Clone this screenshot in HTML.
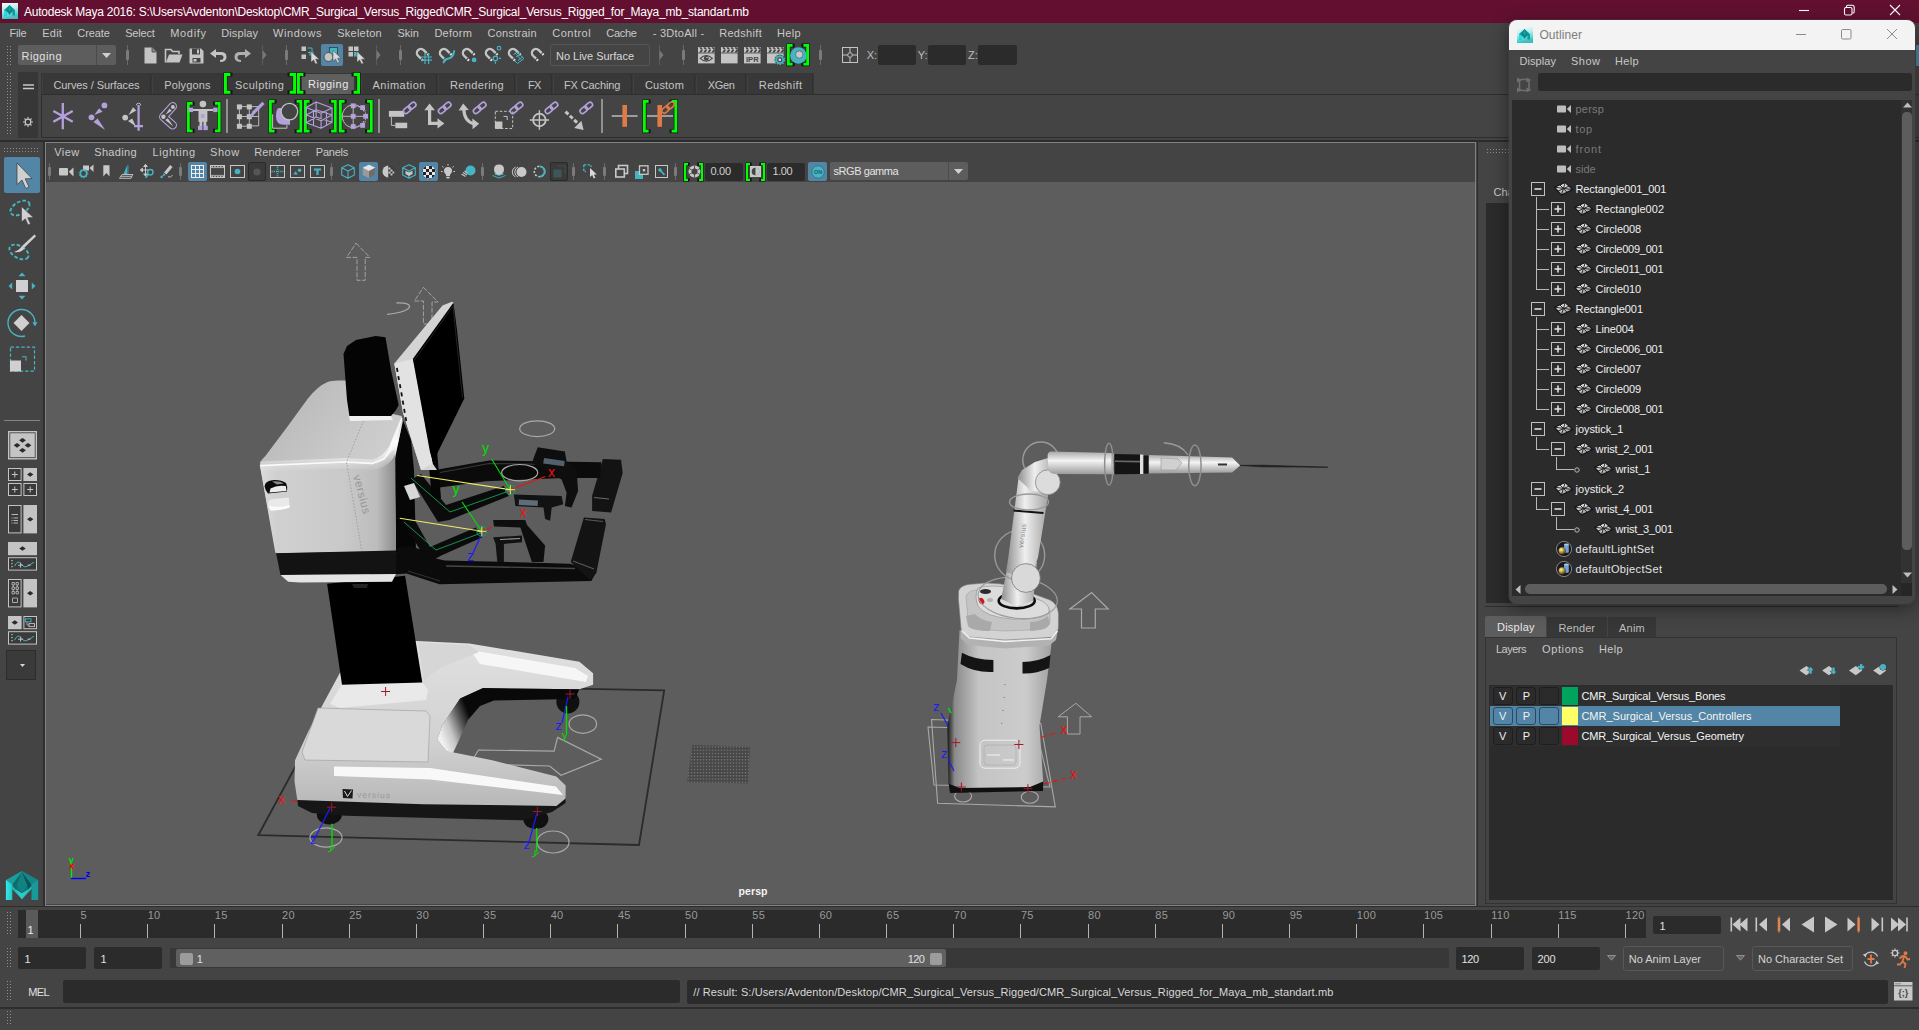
<!DOCTYPE html>
<html><head><meta charset="utf-8"><title>Autodesk Maya 2016</title><style>
html,body{margin:0;padding:0;}
body{width:1919px;height:1030px;overflow:hidden;background:#444444;position:relative;font-family:"Liberation Sans",sans-serif;}
#root{position:absolute;left:0;top:0;width:1919px;height:1030px;overflow:hidden;background:#444444;}
#root div,#root svg,#root span.t{position:absolute;}
span.t{white-space:pre;}
svg{overflow:visible;}
</style></head><body><div id="root">
<div style="left:0px;top:0px;width:1919px;height:23px;background:#631030;"></div>
<span class="t" style="left:24px;top:4.04px;font-size:12px;line-height:16px;color:#ffffff;letter-spacing:-0.239px;">Autodesk Maya 2016: S:\Users\Avdenton\Desktop\CMR_Surgical_Versus_Rigged\CMR_Surgical_Versus_Rigged_for_Maya_mb_standart.mb</span>
<svg style="left:2px;top:3px;" width="16" height="16" viewBox="0 0 16 16"><defs><linearGradient id="mg2" x1="0" y1="0" x2="0.25" y2="1"><stop offset="0" stop-color="#f4fcfb"/><stop offset="0.45" stop-color="#bfeceb"/><stop offset="1" stop-color="#27c4c6"/></linearGradient></defs><rect x="0" y="0" width="16" height="16" fill="url(#mg2)"/><path d="M2 7 L7.6 2 L13 7 V12.4 H10.4 V8.6 L7.6 12 L4.6 8.6 V12.4 H2 Z" fill="#109a9c"/><path d="M2 7 L4.6 8.6 V12.4 H2 Z" fill="#1fe0e2"/><path d="M7.6 2 L4.6 7.5 L7.6 10.4 L10.4 7.5 Z" fill="#0b7e82"/><path d="M7.6 2 L6.2 6.5 L7.6 9 L9 6.5Z" fill="#13a3a4"/><rect x="8" y="13.4" width="7" height="1.4" fill="#8aa" opacity="0.7"/></svg>
<svg style="left:1795px;top:0px;" width="124" height="23"><path d="M4 10.5 H14" stroke="#fff" stroke-width="1.1" fill="none"/><rect x="49.5" y="7.5" width="7.5" height="7.5" rx="1.5" fill="none" stroke="#fff" stroke-width="1.1"/><path d="M51.5 7.3 V6.6 Q51.5 5.3 52.8 5.3 H57.2 Q59.2 5.3 59.2 7.3 V11.7 Q59.2 13 57.9 13 H57.2" fill="none" stroke="#fff" stroke-width="1.1"/><path d="M95 5 L105 15 M105 5 L95 15" stroke="#fff" stroke-width="1.1" fill="none"/></svg>
<span class="t" style="left:9.4px;top:26.19px;font-size:11px;line-height:14px;color:#c8c8c8;letter-spacing:-0.142px;">File</span>
<span class="t" style="left:42.3px;top:26.19px;font-size:11px;line-height:14px;color:#c8c8c8;letter-spacing:0.215px;">Edit</span>
<span class="t" style="left:77.3px;top:26.19px;font-size:11px;line-height:14px;color:#c8c8c8;letter-spacing:-0.103px;">Create</span>
<span class="t" style="left:125.2px;top:26.19px;font-size:11px;line-height:14px;color:#c8c8c8;letter-spacing:-0.195px;">Select</span>
<span class="t" style="left:170.2px;top:26.19px;font-size:11px;line-height:14px;color:#c8c8c8;letter-spacing:0.680px;">Modify</span>
<span class="t" style="left:221.3px;top:26.19px;font-size:11px;line-height:14px;color:#c8c8c8;letter-spacing:0.089px;">Display</span>
<span class="t" style="left:272.9px;top:26.19px;font-size:11px;line-height:14px;color:#c8c8c8;letter-spacing:0.663px;">Windows</span>
<span class="t" style="left:337.3px;top:26.19px;font-size:11px;line-height:14px;color:#c8c8c8;letter-spacing:0.227px;">Skeleton</span>
<span class="t" style="left:397.5px;top:26.19px;font-size:11px;line-height:14px;color:#c8c8c8;letter-spacing:-0.033px;">Skin</span>
<span class="t" style="left:434.4px;top:26.19px;font-size:11px;line-height:14px;color:#c8c8c8;letter-spacing:0.287px;">Deform</span>
<span class="t" style="left:487.5px;top:26.19px;font-size:11px;line-height:14px;color:#c8c8c8;letter-spacing:0.265px;">Constrain</span>
<span class="t" style="left:552.3px;top:26.19px;font-size:11px;line-height:14px;color:#c8c8c8;letter-spacing:0.473px;">Control</span>
<span class="t" style="left:606.3px;top:26.19px;font-size:11px;line-height:14px;color:#c8c8c8;letter-spacing:-0.299px;">Cache</span>
<span class="t" style="left:652.7px;top:26.19px;font-size:11px;line-height:14px;color:#c8c8c8;letter-spacing:0.260px;">- 3DtoAll -</span>
<span class="t" style="left:719.2px;top:26.19px;font-size:11px;line-height:14px;color:#c8c8c8;letter-spacing:0.307px;">Redshift</span>
<span class="t" style="left:777px;top:26.19px;font-size:11px;line-height:14px;color:#c8c8c8;letter-spacing:0.292px;">Help</span>
<div style="left:7px;top:46px;width:4px;height:19px;background:repeating-linear-gradient(90deg,#8e8e8e 0 1px,transparent 1px 3px);-webkit-mask-image:repeating-linear-gradient(0deg,#000 0 1px,transparent 1px 3px);mask-image:repeating-linear-gradient(0deg,#000 0 1px,transparent 1px 3px);"></div>
<div style="left:18px;top:45px;width:98px;height:20px;background:#5d5d5d;border-radius:2px;"></div>
<div style="left:95.5px;top:45px;width:1px;height:20px;background:#4a4a4a;"></div>
<span class="t" style="left:21.5px;top:49.19px;font-size:11px;line-height:14px;color:#e0e0e0;letter-spacing:0.449px;">Rigging</span>
<svg style="left:102px;top:53.2px;" width="9" height="5"><path d="M0 0 L9 0 L4.5 5 Z" fill="#d0d0d0"/></svg>
<div style="left:127px;top:45px;width:1px;height:20px;background:#6a6a6a;"></div>
<div style="left:126px;top:50px;width:3px;height:10px;background:#7a7a7a;border-radius:1px;"></div>
<svg style="left:143.5px;top:46.5px;" width="13" height="17"><path d="M0.5 0.5 H8 L12.5 5 V16.5 H0.5 Z" fill="#c4c4c4"/><path d="M8 0.5 V5 H12.5" fill="#8a8a8a" stroke="#444" stroke-width="0.8"/></svg>
<svg style="left:164.5px;top:48px;" width="18" height="15"><path d="M0.5 14.5 V1.5 H6 L7.5 3.5 H14 V6" fill="none" stroke="#c4c4c4" stroke-width="1.6"/><path d="M1 14.5 L4 6.5 H17.5 L14.5 14.5 Z" fill="#c4c4c4"/></svg>
<svg style="left:189px;top:47.5px;" width="15" height="16"><path d="M0.5 0.5 H12 L14.5 3 V15.5 H0.5 Z" fill="#c4c4c4"/><rect x="3" y="0.5" width="8" height="6" fill="#444"/><rect x="8" y="1.5" width="2" height="4" fill="#c4c4c4"/><rect x="3.5" y="10" width="8" height="4.5" fill="#444"/><rect x="4.5" y="11" width="3" height="2.5" fill="#c4c4c4"/></svg>
<svg style="left:210px;top:49px;" width="17" height="13"><path d="M6 0 L0 4.5 L6 9 V6 H11 Q13.5 6 13.5 8.5 Q13.5 11 10 11 V13 Q16.5 13 16.5 8 Q16.5 3 11 3 H6 Z" fill="#c4c4c4"/></svg>
<svg style="left:233.8px;top:49px;" width="17" height="13"><g transform="translate(17,0) scale(-1,1)"><path d="M6 0 L0 4.5 L6 9 V6 H11 Q13.5 6 13.5 8.5 Q13.5 11 10 11 V13 Q16.5 13 16.5 8 Q16.5 3 11 3 H6 Z" fill="#b0b0b0"/></g></svg>
<div style="left:262px;top:45px;width:1px;height:20px;background:#5a5a5a;"></div>
<svg style="left:262px;top:45px;" width="6" height="20"><path d="M0.5 5 L4.5 10 L0.5 15 Z" fill="#777"/></svg>
<div style="left:285.8px;top:45px;width:1px;height:20px;background:#6a6a6a;"></div>
<div style="left:284.8px;top:50px;width:3px;height:10px;background:#7a7a7a;border-radius:1px;"></div>
<svg style="left:300.5px;top:46px;" width="18" height="18"><rect x="0.5" y="0.5" width="4.5" height="4.5" fill="#c4c4c4"/><rect x="0.5" y="8.5" width="4.5" height="4.5" fill="#c4c4c4"/><path d="M6.5 2 H11 V5 M7 6.5 H9" stroke="#45b5c4" fill="none" stroke-width="1"/><rect x="8.5" y="5.5" width="4" height="4" fill="#45b5c4"/><g transform="translate(10,5.5)"><path d="M0 0 L0 10.8 L2.6 8.4 L4.5 12.6 L6.5 11.7 L4.6 7.7 L8.2 7.7 Z" fill="#d8d8d8" stroke="#444" stroke-width="0.5"/></g></svg>
<div style="left:321px;top:44px;width:22px;height:22px;background:#5285a6;border-radius:2px;"></div>
<svg style="left:323px;top:46px;" width="18" height="18"><rect x="6.5" y="1.5" width="8" height="8" fill="#45b5c4" stroke="#3a3a3a" stroke-width="0.8"/><circle cx="5.5" cy="11" r="4.5" fill="#c4c4c4" stroke="#3a3a3a" stroke-width="0.8"/><g transform="translate(10,4.5)"><path d="M0 0 L0 10.8 L2.6 8.4 L4.5 12.6 L6.5 11.7 L4.6 7.7 L8.2 7.7 Z" fill="#d8d8d8" stroke="#444" stroke-width="0.5"/></g></svg>
<svg style="left:347.5px;top:46px;" width="17" height="18"><rect x="0.5" y="0.5" width="4.5" height="4.5" fill="#c4c4c4"/><rect x="6" y="0.5" width="4.5" height="4.5" fill="#c4c4c4"/><rect x="0.5" y="6" width="4.5" height="4.5" fill="#c4c4c4"/><rect x="6" y="6" width="4.5" height="4.5" fill="#45b5c4"/><g transform="translate(9,5.5)"><path d="M0 0 L0 10.8 L2.6 8.4 L4.5 12.6 L6.5 11.7 L4.6 7.7 L8.2 7.7 Z" fill="#d8d8d8" stroke="#444" stroke-width="0.5"/></g></svg>
<div style="left:375.5px;top:45px;width:1px;height:20px;background:#5a5a5a;"></div>
<svg style="left:375.5px;top:45px;" width="6" height="20"><path d="M0.5 5 L4.5 10 L0.5 15 Z" fill="#777"/></svg>
<div style="left:399.5px;top:45px;width:1px;height:20px;background:#6a6a6a;"></div>
<div style="left:398.5px;top:50px;width:3px;height:10px;background:#7a7a7a;border-radius:1px;"></div>
<svg style="left:415px;top:45px;" width="22" height="22"><g transform="translate(5.9,7.9) rotate(-45)"><path d="M-4 4.2 V0 A4 4 0 0 1 4 0 V4.2" fill="none" stroke="#c4c4c4" stroke-width="2.4"/><path d="M-5.2 5.2 h2.4 v1.7 h-2.4z M2.8 5.2 h2.4 v1.7 h-2.4z" fill="#e6e6e6"/></g><path d="M10 7.9 V18.9 M13.6 7.9 V18.9 M6 12 H17 M6 15.2 H17" stroke="#45b5c4" stroke-width="1.2"/></svg>
<svg style="left:438px;top:45px;" width="22" height="22"><g transform="translate(5.9,7.9) rotate(-45)"><path d="M-4 4.2 V0 A4 4 0 0 1 4 0 V4.2" fill="none" stroke="#c4c4c4" stroke-width="2.4"/><path d="M-5.2 5.2 h2.4 v1.7 h-2.4z M2.8 5.2 h2.4 v1.7 h-2.4z" fill="#e6e6e6"/></g><path d="M5.6 18.2 Q5.6 14.6 10.5 13.6 Q15.6 12.4 16.2 5.4" fill="none" stroke="#45b5c4" stroke-width="2"/></svg>
<svg style="left:461px;top:45px;" width="22" height="22"><g transform="translate(5.9,7.9) rotate(-45)"><path d="M-4 4.2 V0 A4 4 0 0 1 4 0 V4.2" fill="none" stroke="#c4c4c4" stroke-width="2.4"/><path d="M-5.2 5.2 h2.4 v1.7 h-2.4z M2.8 5.2 h2.4 v1.7 h-2.4z" fill="#e6e6e6"/></g><circle cx="13.1" cy="14.9" r="2.4" fill="#45b5c4"/></svg>
<svg style="left:484px;top:45px;" width="22" height="22"><g transform="translate(5.9,7.9) rotate(-45)"><path d="M-4 4.2 V0 A4 4 0 0 1 4 0 V4.2" fill="none" stroke="#c4c4c4" stroke-width="2.4"/><path d="M-5.2 5.2 h2.4 v1.7 h-2.4z M2.8 5.2 h2.4 v1.7 h-2.4z" fill="#e6e6e6"/></g><circle cx="15" cy="3.2" r="1.8" fill="none" stroke="#45b5c4" stroke-width="1.1"/><circle cx="11.4" cy="13.4" r="2.2" fill="none" stroke="#45b5c4" stroke-width="1.2"/><path d="M15 13.4 h2 M11.4 16.6 v2.2" stroke="#45b5c4" stroke-width="1.2"/></svg>
<svg style="left:507px;top:45px;" width="22" height="22"><g transform="translate(5.9,7.9) rotate(-45)"><path d="M-4 4.2 V0 A4 4 0 0 1 4 0 V4.2" fill="none" stroke="#c4c4c4" stroke-width="2.4"/><path d="M-5.2 5.2 h2.4 v1.7 h-2.4z M2.8 5.2 h2.4 v1.7 h-2.4z" fill="#e6e6e6"/></g><path d="M6.5 9.5 L10 7 L17 13.5 L10.5 18.5 L7.5 15.5 M8.2 8.2 L14 14.5 M9 12 L12.5 9.5 M11 15.5 L15.5 12" fill="none" stroke="#45b5c4" stroke-width="1"/></svg>
<svg style="left:530.4px;top:45px;" width="22" height="22"><g transform="translate(5.9,7.9) rotate(-45)"><path d="M-4 4.2 V0 A4 4 0 0 1 4 0 V4.2" fill="none" stroke="#c4c4c4" stroke-width="2.4"/><path d="M-5.2 5.2 h2.4 v1.7 h-2.4z M2.8 5.2 h2.4 v1.7 h-2.4z" fill="#e6e6e6"/></g></svg>
<div style="left:550px;top:44px;width:99.5px;height:21.5px;background:#444;border:1px solid #565656;border-radius:3px;box-sizing:border-box;"></div>
<span class="t" style="left:556px;top:48.89px;font-size:11px;line-height:14px;color:#d8d8d8;letter-spacing:-0.019px;">No Live Surface</span>
<div style="left:659px;top:45px;width:1px;height:20px;background:#5a5a5a;"></div>
<svg style="left:659px;top:45px;" width="6" height="20"><path d="M0.5 5 L4.5 10 L0.5 15 Z" fill="#777"/></svg>
<div style="left:682.8px;top:45px;width:1px;height:20px;background:#6a6a6a;"></div>
<div style="left:681.8px;top:50px;width:3px;height:10px;background:#7a7a7a;border-radius:1px;"></div>
<svg style="left:697.7px;top:46.7px;" width="16.6" height="16.6"><rect x="0" y="0" width="16.6" height="5.6" fill="#c4c4c4"/><path d="M1.2 0.3 l2.2 0 l1.6 2.3 l-2.2 0z M2.8 3.1 l2.2 0 l-1.6 2.3 l-2.2 0z" fill="#444"/><path d="M5.3 0.3 l2.2 0 l1.6 2.3 l-2.2 0z M6.9 3.1 l2.2 0 l-1.6 2.3 l-2.2 0z" fill="#444"/><path d="M9.4 0.3 l2.2 0 l1.6 2.3 l-2.2 0z M11 3.1 l2.2 0 l-1.6 2.3 l-2.2 0z" fill="#444"/><path d="M13.5 0.3 l2.2 0 l1.6 2.3 l-2.2 0z M15.1 3.1 l2.2 0 l-1.6 2.3 l-2.2 0z" fill="#444"/><rect x="0" y="6.4" width="16.6" height="10" fill="#c4c4c4"/><path d="M2.2 11.4 Q8.3 5.6 14.4 11.4 Q8.3 17 2.2 11.4Z" fill="none" stroke="#444" stroke-width="1.1"/><circle cx="8.3" cy="11.2" r="2.4" fill="#444"/><circle cx="9" cy="10.5" r="0.8" fill="#c4c4c4"/></svg>
<svg style="left:720.6px;top:46.7px;" width="16.6" height="16.6"><rect x="0" y="0" width="16.6" height="5.6" fill="#c4c4c4"/><path d="M1.2 0.3 l2.2 0 l1.6 2.3 l-2.2 0z M2.8 3.1 l2.2 0 l-1.6 2.3 l-2.2 0z" fill="#444"/><path d="M5.3 0.3 l2.2 0 l1.6 2.3 l-2.2 0z M6.9 3.1 l2.2 0 l-1.6 2.3 l-2.2 0z" fill="#444"/><path d="M9.4 0.3 l2.2 0 l1.6 2.3 l-2.2 0z M11 3.1 l2.2 0 l-1.6 2.3 l-2.2 0z" fill="#444"/><path d="M13.5 0.3 l2.2 0 l1.6 2.3 l-2.2 0z M15.1 3.1 l2.2 0 l-1.6 2.3 l-2.2 0z" fill="#444"/><rect x="0" y="6.4" width="16.6" height="10" fill="#c4c4c4"/></svg>
<svg style="left:743.5px;top:46.7px;" width="16.6" height="16.6"><rect x="0" y="0" width="16.6" height="5.6" fill="#c4c4c4"/><path d="M1.2 0.3 l2.2 0 l1.6 2.3 l-2.2 0z M2.8 3.1 l2.2 0 l-1.6 2.3 l-2.2 0z" fill="#444"/><path d="M5.3 0.3 l2.2 0 l1.6 2.3 l-2.2 0z M6.9 3.1 l2.2 0 l-1.6 2.3 l-2.2 0z" fill="#444"/><path d="M9.4 0.3 l2.2 0 l1.6 2.3 l-2.2 0z M11 3.1 l2.2 0 l-1.6 2.3 l-2.2 0z" fill="#444"/><path d="M13.5 0.3 l2.2 0 l1.6 2.3 l-2.2 0z M15.1 3.1 l2.2 0 l-1.6 2.3 l-2.2 0z" fill="#444"/><rect x="0" y="6.4" width="16.6" height="10" fill="#c4c4c4"/><text x="8.3" y="14.6" font-size="7.6" font-weight="bold" text-anchor="middle" fill="#444" font-family="Liberation Sans,sans-serif">IPR</text></svg>
<svg style="left:766.5px;top:46.7px;" width="16.6" height="16.6"><rect x="0" y="0" width="16.6" height="5.6" fill="#c4c4c4"/><path d="M1.2 0.3 l2.2 0 l1.6 2.3 l-2.2 0z M2.8 3.1 l2.2 0 l-1.6 2.3 l-2.2 0z" fill="#444"/><path d="M5.3 0.3 l2.2 0 l1.6 2.3 l-2.2 0z M6.9 3.1 l2.2 0 l-1.6 2.3 l-2.2 0z" fill="#444"/><path d="M9.4 0.3 l2.2 0 l1.6 2.3 l-2.2 0z M11 3.1 l2.2 0 l-1.6 2.3 l-2.2 0z" fill="#444"/><path d="M13.5 0.3 l2.2 0 l1.6 2.3 l-2.2 0z M15.1 3.1 l2.2 0 l-1.6 2.3 l-2.2 0z" fill="#444"/><rect x="0" y="6.4" width="16.6" height="10" fill="#c4c4c4"/><circle cx="12.8" cy="12.8" r="5.2" fill="#444"/><circle cx="12.8" cy="12.8" r="3.4" fill="none" stroke="#45b5c4" stroke-width="1.8"/><circle cx="12.8" cy="12.8" r="4.6" fill="none" stroke="#45b5c4" stroke-width="1.3" stroke-dasharray="1.5 1.4"/><circle cx="12.8" cy="12.8" r="1.4" fill="#ddd"/></svg>
<svg style="left:787px;top:44.3px;" width="22" height="21.6"><path d="M5.6 1.4 H1.4 V20.2 H5.6 M16.4 1.4 H20.6 V20.2 H16.4" fill="none" stroke="#141414" stroke-width="4" stroke-linecap="square"/><path d="M5.6 1.4 H1.4 V20.2 H5.6 M16.4 1.4 H20.6 V20.2 H16.4" fill="none" stroke="#00ff00" stroke-width="2.8"/></svg>
<svg style="left:789.5px;top:46.5px;" width="17" height="17"><circle cx="8.4" cy="8.5" r="8.3" fill="#45b5c4"/><circle cx="9.3" cy="7.6" r="3.7" fill="#c8c8c8" stroke="#4a6a70" stroke-width="0.8"/></svg>
<div style="left:819.5px;top:45px;width:1px;height:20px;background:#6a6a6a;"></div>
<div style="left:818.5px;top:50px;width:3px;height:10px;background:#7a7a7a;border-radius:1px;"></div>
<svg style="left:842px;top:46.5px;" width="16" height="16"><rect x="0.5" y="0.5" width="15" height="15" fill="none" stroke="#c4c4c4" stroke-width="1"/><path d="M8 0.5 V5.5 M8 10.5 V15.5 M0.5 8 H5.5 M10.5 8 H15.5" stroke="#c4c4c4" stroke-width="1"/><circle cx="8" cy="8" r="2.3" fill="none" stroke="#c4c4c4" stroke-width="1"/></svg>
<span class="t" style="left:866.7px;top:48.19px;font-size:11px;line-height:14px;color:#bdbdbd;">X:</span>
<div style="left:878px;top:45px;width:38px;height:19.5px;background:#2b2b2b;border-radius:2px;"></div>
<span class="t" style="left:917.7px;top:48.19px;font-size:11px;line-height:14px;color:#bdbdbd;">Y:</span>
<div style="left:927.7px;top:45px;width:38.3px;height:19.5px;background:#2b2b2b;border-radius:2px;"></div>
<span class="t" style="left:968px;top:48.19px;font-size:11px;line-height:14px;color:#bdbdbd;">Z:</span>
<div style="left:978px;top:45px;width:38.7px;height:19.5px;background:#2b2b2b;border-radius:2px;"></div>
<div style="left:1915.5px;top:45px;width:4px;height:21px;background:#5285a6;"></div>
<div style="left:7px;top:73px;width:4px;height:61px;background:repeating-linear-gradient(90deg,#8e8e8e 0 1px,transparent 1px 3px);-webkit-mask-image:repeating-linear-gradient(0deg,#000 0 1px,transparent 1px 3px);mask-image:repeating-linear-gradient(0deg,#000 0 1px,transparent 1px 3px);"></div>
<div style="left:18px;top:72px;width:20px;height:66px;background:#373737;"></div>
<div style="left:41px;top:73px;width:1878px;height:21.5px;background:#373737;"></div>
<div style="left:42px;top:73.5px;width:109.3px;height:20.5px;background:#383838;border-radius:3px 3px 0 0;box-shadow:inset 1px 0 0 #404040, inset -1px 0 0 #303030;"></div>
<div style="left:152.3px;top:73.5px;width:69.9px;height:20.5px;background:#383838;border-radius:3px 3px 0 0;box-shadow:inset 1px 0 0 #404040, inset -1px 0 0 #303030;"></div>
<div style="left:223.2px;top:73.5px;width:72.2px;height:20.5px;background:#383838;border-radius:3px 3px 0 0;box-shadow:inset 1px 0 0 #404040, inset -1px 0 0 #303030;"></div>
<div style="left:302px;top:73.5px;width:52px;height:20.5px;background:#5f5f5f;border-radius:2px 2px 0 0;"></div>
<div style="left:360.9px;top:73.5px;width:76.3px;height:20.5px;background:#383838;border-radius:3px 3px 0 0;box-shadow:inset 1px 0 0 #404040, inset -1px 0 0 #303030;"></div>
<div style="left:438.2px;top:73.5px;width:77.05px;height:20.5px;background:#383838;border-radius:3px 3px 0 0;box-shadow:inset 1px 0 0 #404040, inset -1px 0 0 #303030;"></div>
<div style="left:516.25px;top:73.5px;width:35.25px;height:20.5px;background:#383838;border-radius:3px 3px 0 0;box-shadow:inset 1px 0 0 #404040, inset -1px 0 0 #303030;"></div>
<div style="left:552.5px;top:73.5px;width:79.7px;height:20.5px;background:#383838;border-radius:3px 3px 0 0;box-shadow:inset 1px 0 0 #404040, inset -1px 0 0 #303030;"></div>
<div style="left:633.2px;top:73.5px;width:62.05px;height:20.5px;background:#383838;border-radius:3px 3px 0 0;box-shadow:inset 1px 0 0 #404040, inset -1px 0 0 #303030;"></div>
<div style="left:696.25px;top:73.5px;width:50.05px;height:20.5px;background:#383838;border-radius:3px 3px 0 0;box-shadow:inset 1px 0 0 #404040, inset -1px 0 0 #303030;"></div>
<div style="left:747.3px;top:73.5px;width:66.2px;height:20.5px;background:#383838;border-radius:3px 3px 0 0;box-shadow:inset 1px 0 0 #404040, inset -1px 0 0 #303030;"></div>
<span class="t" style="left:53.5px;top:78.19px;font-size:11px;line-height:14px;color:#c4c4c4;letter-spacing:-0.095px;top:77.7px;">Curves / Surfaces</span>
<span class="t" style="left:164.2px;top:78.19px;font-size:11px;line-height:14px;color:#c4c4c4;letter-spacing:0.135px;top:77.7px;">Polygons</span>
<span class="t" style="left:235px;top:78.19px;font-size:11px;line-height:14px;color:#c4c4c4;letter-spacing:0.443px;top:77.7px;">Sculpting</span>
<span class="t" style="left:308px;top:78.19px;font-size:11px;line-height:14px;color:#e8e8e8;letter-spacing:0.499px;top:76.9px;">Rigging</span>
<span class="t" style="left:372.5px;top:78.19px;font-size:11px;line-height:14px;color:#c4c4c4;letter-spacing:0.498px;top:77.7px;">Animation</span>
<span class="t" style="left:450px;top:78.19px;font-size:11px;line-height:14px;color:#c4c4c4;letter-spacing:0.343px;top:77.7px;">Rendering</span>
<span class="t" style="left:528px;top:78.19px;font-size:11px;line-height:14px;color:#c4c4c4;letter-spacing:-0.600px;top:77.7px;">FX</span>
<span class="t" style="left:564px;top:78.19px;font-size:11px;line-height:14px;color:#c4c4c4;letter-spacing:-0.119px;top:77.7px;">FX Caching</span>
<span class="t" style="left:645px;top:78.19px;font-size:11px;line-height:14px;color:#c4c4c4;letter-spacing:0.180px;top:77.7px;">Custom</span>
<span class="t" style="left:707.7px;top:78.19px;font-size:11px;line-height:14px;color:#c4c4c4;letter-spacing:-0.343px;top:77.7px;">XGen</span>
<span class="t" style="left:758.8px;top:78.19px;font-size:11px;line-height:14px;color:#c4c4c4;letter-spacing:0.407px;top:77.7px;">Redshift</span>
<div style="left:814px;top:73px;width:1105px;height:22px;background:#444444;"></div>
<div style="left:41px;top:94px;width:1878px;height:44px;background:#444444;box-shadow:inset 1px 1px 0 #2e2e2e, inset 0 -1px 0 #2e2e2e;"></div>
<svg style="left:224px;top:73.2px;" width="72" height="20.7"><path d="M6.4 1.45 H1.45 V19.25 H6.4 M65.6 1.45 H70.55 V19.25 H65.6" fill="none" stroke="#141414" stroke-width="4.1" stroke-linecap="square"/><path d="M6.4 1.45 H1.45 V19.25 H6.4 M65.6 1.45 H70.55 V19.25 H65.6" fill="none" stroke="#00ff00" stroke-width="2.9"/></svg>
<svg style="left:297px;top:73.2px;" width="63" height="20.7"><path d="M6.4 1.45 H1.45 V19.25 H6.4 M56.6 1.45 H61.55 V19.25 H56.6" fill="none" stroke="#141414" stroke-width="4.1" stroke-linecap="square"/><path d="M6.4 1.45 H1.45 V19.25 H6.4 M56.6 1.45 H61.55 V19.25 H56.6" fill="none" stroke="#00ff00" stroke-width="2.9"/></svg>
<svg style="left:22.5px;top:84px;" width="11" height="6"><path d="M0 1 H11 M0 4.5 H11" stroke="#c8c8c8" stroke-width="1.6"/></svg>
<svg style="left:23px;top:117px;" width="10" height="10" viewBox="0 0 12 12"><circle cx="6" cy="6" r="3.4" fill="none" stroke="#c8c8c8" stroke-width="1.5"/><path d="M6 0 V2 M6 10 V12 M0 6 H2 M10 6 H12 M1.8 1.8 L3.2 3.2 M8.8 8.8 L10.2 10.2 M1.8 10.2 L3.2 8.8 M8.8 3.2 L10.2 1.8" stroke="#c8c8c8" stroke-width="1.4"/></svg>
<svg style="left:186.6px;top:102.4px;" width="33.6" height="30.2"><path d="M5.6 1.4 H1.4 V28.8 H5.6 M28 1.4 H32.2 V28.8 H28" fill="none" stroke="#141414" stroke-width="4" stroke-linecap="square"/><path d="M5.6 1.4 H1.4 V28.8 H5.6 M28 1.4 H32.2 V28.8 H28" fill="none" stroke="#00ff00" stroke-width="2.8"/></svg>
<div style="left:226.1px;top:99px;width:1.8px;height:34px;background:#909090;"></div>
<svg style="left:268.6px;top:100px;" width="33.2" height="32.6"><path d="M5.6 1.4 H1.4 V31.2 H5.6 M27.6 1.4 H31.8 V31.2 H27.6" fill="none" stroke="#141414" stroke-width="4" stroke-linecap="square"/><path d="M5.6 1.4 H1.4 V31.2 H5.6 M27.6 1.4 H31.8 V31.2 H27.6" fill="none" stroke="#00ff00" stroke-width="2.8"/></svg>
<svg style="left:304.2px;top:100px;" width="32.7" height="32.6"><path d="M5.6 1.4 H1.4 V31.2 H5.6 M27.1 1.4 H31.3 V31.2 H27.1" fill="none" stroke="#141414" stroke-width="4" stroke-linecap="square"/><path d="M5.6 1.4 H1.4 V31.2 H5.6 M27.1 1.4 H31.3 V31.2 H27.1" fill="none" stroke="#00ff00" stroke-width="2.8"/></svg>
<svg style="left:338.9px;top:100px;" width="33.7" height="32.6"><path d="M5.6 1.4 H1.4 V31.2 H5.6 M28.1 1.4 H32.3 V31.2 H28.1" fill="none" stroke="#141414" stroke-width="4" stroke-linecap="square"/><path d="M5.6 1.4 H1.4 V31.2 H5.6 M28.1 1.4 H32.3 V31.2 H28.1" fill="none" stroke="#00ff00" stroke-width="2.8"/></svg>
<div style="left:378.1px;top:99px;width:1.8px;height:34px;background:#909090;"></div>
<div style="left:600.8px;top:99px;width:1.8px;height:34px;background:#909090;"></div>
<svg style="left:643.3px;top:100px;" width="34.2" height="32.6"><path d="M5.6 1.4 H1.4 V31.2 H5.6 M28.6 1.4 H32.8 V31.2 H28.6" fill="none" stroke="#141414" stroke-width="4" stroke-linecap="square"/><path d="M5.6 1.4 H1.4 V31.2 H5.6 M28.6 1.4 H32.8 V31.2 H28.6" fill="none" stroke="#00ff00" stroke-width="2.8"/></svg>
<svg style="left:0px;top:0px;" width="700" height="140"><path d="M62.8 102.9 V129.2 M53.4 110.9 L72.7 121.7 M53.4 121.7 L72.7 110.9" stroke="#b4a0dc" stroke-width="2.3" fill="none"/><circle cx="91.5" cy="117.3" r="2.9" fill="#b4a0dc"/><circle cx="104.4" cy="105.4" r="2.9" fill="#b4a0dc"/><path d="M99 108.2 L102.6 111.8 L94.3 115 Z" fill="#b4a0dc"/><path d="M93.4 121.9 L97.6 118.6 L105.2 130 Z" fill="#b4a0dc"/><circle cx="125.2" cy="117.6" r="2.9" fill="#c4c4c4"/><path d="M133 107.2 L136.3 110.4 L128.5 115 Z" fill="#c4c4c4"/><path d="M128 121 L132.2 118.6 L136 126.5 Z" fill="#c4c4c4"/><path d="M138.6 105 V130.8 M134.1 126.2 H143" stroke="#b4a0dc" stroke-width="2.2" fill="none"/><path d="M136.4 105.4 A2.2 2.2 0 0 1 140.8 105.4" fill="none" stroke="#c4c4c4" stroke-width="0.9"/><path d="M172.7 106.4 L163.3 116.8 L172.7 125.2" fill="none" stroke="#b4a0dc" stroke-width="8.6" stroke-linecap="round" stroke-linejoin="round"/><path d="M172.7 106.4 L163.3 116.8 L172.7 125.2" fill="none" stroke="#444" stroke-width="6.4" stroke-linecap="round" stroke-linejoin="round"/><circle cx="172.9" cy="106.9" r="2" fill="#c4c4c4"/><circle cx="163.4" cy="116.8" r="2.2" fill="#c4c4c4"/><path d="M169.5 108.6 L171.7 110.8 L165.5 114.8 Z M165.2 120 L167.8 118.2 L173.4 126.4 Z" fill="#c4c4c4"/><circle cx="202.9" cy="104.1" r="3.3" fill="#c4c4c4"/><path d="M193 108.9 H213.3 V110.9 H207.4 V121.8 H206.3 V126 H203.5 V121.8 H202.3 V126 H199.5 V121.8 H198.5 V110.9 H193 Z" fill="#c4c4c4"/><rect x="188.6" y="107.7" width="4.4" height="4.4" fill="#b4a0dc"/><rect x="213.2" y="107.7" width="4.4" height="4.4" fill="#b4a0dc"/><rect x="200.5" y="113.8" width="4.4" height="4.4" fill="#b4a0dc"/><rect x="198" y="125.7" width="4.4" height="4.4" fill="#b4a0dc"/><rect x="203.4" y="125.7" width="4.4" height="4.4" fill="#b4a0dc"/><rect x="200.5" y="113.8" width="4.4" height="4.4" fill="none" stroke="#c4c4c4" stroke-width="0.5"/><path d="M239.4 106.6 V126.2 M249.3 106.6 V126.2 M239.4 106.6 H258.7 V125.9 H249.3 M239.4 116.5 H258.7 M239.4 126.2 H249.3" fill="none" stroke="#c4c4c4" stroke-width="0.9"/><rect x="236.9" y="104.4" width="5" height="5" fill="#c4c4c4"/><rect x="246.8" y="104.4" width="5" height="5" fill="#c4c4c4"/><rect x="236.9" y="114.2" width="5" height="5" fill="#c4c4c4"/><rect x="246.8" y="114.2" width="5" height="5" fill="#c4c4c4"/><rect x="236.9" y="123.8" width="5" height="5" fill="#c4c4c4"/><rect x="246.8" y="123.8" width="5" height="5" fill="#c4c4c4"/><path d="M262.3 101.8 L264.6 104 L254.5 114 L252.2 111.8 Z" fill="#b4a0dc"/><path d="M252.6 111.2 L255 113.6 Q252.4 118 246.6 118 Q250.6 116 252.6 111.2Z" fill="#b4a0dc"/><path d="M272.6 114.3 V128.2 H286.9 V125.2" fill="none" stroke="#c4c4c4" stroke-width="1"/><path d="M279 108 H290 V124.8 H284 Q276 124.8 276 116.8 Q276 108 279 108Z" fill="#b4a0dc"/><circle cx="289.4" cy="111.6" r="8.3" fill="#444" stroke="#c4c4c4" stroke-width="1.2"/><path d="M316.1 101.9 L306.2 107.4 V122.7 L321.1 128.2 L332 122.2 V107.9 Z M306.2 107.4 L321.1 113.3 L332 107.9 M321.1 113.3 V128.2 M306.2 115 L321.1 120.8 L332 115 M306.2 115 L316.1 109.8 L332 115 M316.1 101.9 V117 L306.2 122.7 M316.1 117 L332 122.2 M313.5 110.3 V125.4 M326.5 110.6 V125.2" fill="none" stroke="#b4a0dc" stroke-width="1.1" stroke-linejoin="round"/><path d="M364 111.5 A11.4 11.4 0 1 0 364 121" fill="none" stroke="#c4c4c4" stroke-width="1"/><path d="M342.4 116.3 H364 M353.2 108 V124.5" stroke="#c4c4c4" stroke-width="0.9"/><path d="M355.7 106 L360.2 107.5 M365 109.9 L365.5 113.8 M365.5 118.8 L365 123.2 M355.7 126.5 L360.2 125.5" stroke="#c4c4c4" stroke-width="0.8" stroke-dasharray="1.5 1"/><rect x="350.8" y="103.4" width="4.8" height="4.8" fill="#b4a0dc"/><rect x="360.2" y="105.2" width="4.8" height="4.8" fill="#b4a0dc"/><rect x="350.8" y="113.9" width="4.8" height="4.8" fill="#b4a0dc"/><rect x="363.2" y="113.9" width="4.8" height="4.8" fill="#b4a0dc"/><rect x="350.8" y="124.1" width="4.8" height="4.8" fill="#b4a0dc"/><rect x="360.2" y="123" width="4.8" height="4.8" fill="#b4a0dc"/><rect x="388.9" y="110.9" width="15.3" height="5.9" fill="#c4c4c4"/><rect x="395.3" y="122.7" width="11.9" height="5.5" fill="#c4c4c4"/><path d="M391.4 117 V125.4 H395.3" fill="none" stroke="#c4c4c4" stroke-width="0.9"/><g transform="translate(409.7,107.9) rotate(-40)"><rect x="-7.4" y="-2.5" width="8.2" height="5" rx="2.5" fill="none" stroke="#b4a0dc" stroke-width="1.6"/><rect x="-0.8" y="-2.5" width="8.2" height="5" rx="2.5" fill="none" stroke="#b4a0dc" stroke-width="1.6"/></g><path d="M429.6 109 V123.4 H438" fill="none" stroke="#c4c4c4" stroke-width="3.2"/><path d="M424.3 110.3 L429.6 103.6 L434.9 110.3 Z M437.5 118.2 L444.4 123.4 L437.5 128.6 Z" fill="#c4c4c4"/><g transform="translate(444.7,107.9) rotate(-40)"><rect x="-7.4" y="-2.5" width="8.2" height="5" rx="2.5" fill="none" stroke="#b4a0dc" stroke-width="1.6"/><rect x="-0.8" y="-2.5" width="8.2" height="5" rx="2.5" fill="none" stroke="#b4a0dc" stroke-width="1.6"/></g><path d="M463.8 109 Q464.2 121.4 474 123.8" fill="none" stroke="#c4c4c4" stroke-width="3.2"/><path d="M458.6 110.6 L463.2 103.6 L468.8 110 Z M472.3 118.6 L479.2 123.8 L472.6 129.2 Z" fill="#c4c4c4"/><g transform="translate(479.7,107.9) rotate(-40)"><rect x="-7.4" y="-2.5" width="8.2" height="5" rx="2.5" fill="none" stroke="#b4a0dc" stroke-width="1.6"/><rect x="-0.8" y="-2.5" width="8.2" height="5" rx="2.5" fill="none" stroke="#b4a0dc" stroke-width="1.6"/></g><rect x="495.3" y="111.3" width="17.4" height="17.2" fill="none" stroke="#c4c4c4" stroke-width="1" stroke-dasharray="2.6 1.8"/><rect x="495" y="121.5" width="7.4" height="7.4" fill="#c4c4c4"/><path d="M503.5 116.4 H507.2 V120" fill="none" stroke="#c4c4c4" stroke-width="1"/><g transform="translate(516.5,107.9) rotate(-40)"><rect x="-7.4" y="-2.5" width="8.2" height="5" rx="2.5" fill="none" stroke="#b4a0dc" stroke-width="1.6"/><rect x="-0.8" y="-2.5" width="8.2" height="5" rx="2.5" fill="none" stroke="#b4a0dc" stroke-width="1.6"/></g><circle cx="539.4" cy="120" r="6.3" fill="none" stroke="#c4c4c4" stroke-width="1.8"/><path d="M539.4 110.2 V129.8 M529.8 120 H549" stroke="#c4c4c4" stroke-width="1.4"/><g transform="translate(551.5,107.9) rotate(-40)"><rect x="-7.4" y="-2.5" width="8.2" height="5" rx="2.5" fill="none" stroke="#b4a0dc" stroke-width="1.6"/><rect x="-0.8" y="-2.5" width="8.2" height="5" rx="2.5" fill="none" stroke="#b4a0dc" stroke-width="1.6"/></g><path d="M565.5 111.6 L579.5 125" stroke="#c4c4c4" stroke-width="3" stroke-dasharray="4 2" fill="none"/><path d="M583.6 130 L574.2 128 L581.4 120.8 Z" fill="#c4c4c4"/><g transform="translate(586.3,107.9) rotate(-40)"><rect x="-7.4" y="-2.5" width="8.2" height="5" rx="2.5" fill="none" stroke="#b4a0dc" stroke-width="1.6"/><rect x="-0.8" y="-2.5" width="8.2" height="5" rx="2.5" fill="none" stroke="#b4a0dc" stroke-width="1.6"/></g><path d="M611.7 116 H637.5" stroke="#c4c4c4" stroke-width="1.4"/><rect x="622.4" y="105" width="4.6" height="21.8" fill="#e07a46"/><path d="M647 116 H673" stroke="#c4c4c4" stroke-width="1.4"/><rect x="657.4" y="105" width="4.6" height="21.8" fill="#e07a46"/><g transform="translate(668,107.6) rotate(-40)"><rect x="-7.4" y="-2.5" width="8.2" height="5" rx="2.5" fill="none" stroke="#e07a46" stroke-width="1.6"/><rect x="-0.8" y="-2.5" width="8.2" height="5" rx="2.5" fill="none" stroke="#e07a46" stroke-width="1.6"/></g></svg>
<div style="left:0px;top:140px;width:1919px;height:2px;background:#2c2c2c;"></div>
<div style="left:43px;top:141px;width:2px;height:765px;background:#2f2f2f;"></div>
<div style="left:0px;top:905.5px;width:1919px;height:1.5px;background:#2d2d2d;"></div>
<div style="left:4px;top:148px;width:34px;height:4px;background:repeating-linear-gradient(90deg,#8e8e8e 0 1px,transparent 1px 3px);-webkit-mask-image:repeating-linear-gradient(0deg,#000 0 1px,transparent 1px 3px);mask-image:repeating-linear-gradient(0deg,#000 0 1px,transparent 1px 3px);"></div>
<div style="left:4px;top:157px;width:36px;height:36px;background:#5285a6;border-radius:2px;"></div>
<svg style="left:14px;top:161px;" width="20" height="30"><path d="M3 2 L3 23.5 L8 19 L11.8 27.5 L15 26 L11.2 17.8 L18 17.5 Z" fill="#d0d0d0" stroke="#3a3a3a" stroke-width="0.7"/></svg>
<svg style="left:7px;top:196px;" width="30" height="32"><ellipse cx="13" cy="12" rx="10.5" ry="6" transform="rotate(-30 13 12)" fill="none" stroke="#45b5c4" stroke-width="1.9" stroke-dasharray="3.6 2"/><path d="M14.5 10.5 L14.5 26 L18.3 22.8 L21 29 L23.5 27.8 L20.7 21.8 L26.5 21.6 Z" fill="#d0d0d0" stroke="#3a3a3a" stroke-width="0.6"/></svg>
<svg style="left:6px;top:233px;" width="32" height="32"><ellipse cx="13" cy="19" rx="10.5" ry="6" transform="rotate(30 13 19)" fill="none" stroke="#45b5c4" stroke-width="1.9" stroke-dasharray="3.6 2"/><path d="M28.5 1.5 L30 3.2 L18 15 L16 13 Z" fill="#d0d0d0"/><path d="M16 13 L18.5 15.5 Q14 20.5 8 19 Q13 17.5 16 13Z" fill="#d0d0d0"/></svg>
<svg style="left:8px;top:272px;" width="28" height="28"><rect x="8" y="8" width="12" height="12" fill="#d0d0d0"/><path d="M14 0.5 L17.5 4.2 H10.5 Z M14 27.5 L17.5 23.8 H10.5 Z M0.5 14 L4.2 10.5 V17.5 Z M27.5 14 L23.8 10.5 V17.5 Z" fill="#45b5c4"/></svg>
<svg style="left:6px;top:307px;" width="32" height="32"><path d="M15.5 8 L23.5 16 L15.5 24 L7.5 16 Z" fill="#d0d0d0"/><path d="M19 29 A13.5 13.5 0 1 1 29 16" fill="none" stroke="#45b5c4" stroke-width="1.4"/><path d="M26.4 15.2 L31.4 15.2 L29 19.5 Z" fill="#45b5c4"/></svg>
<svg style="left:9px;top:346px;" width="27" height="27"><rect x="1.5" y="1.2" width="24" height="24" fill="none" stroke="#45b5c4" stroke-width="1.2" stroke-dasharray="3.4 2"/><rect x="1" y="14.5" width="11" height="11" fill="#d0d0d0"/><path d="M13 10.8 H17 V14.5" fill="none" stroke="#45b5c4" stroke-width="1.1"/></svg>
<div style="left:4px;top:419.5px;width:36px;height:1.8px;background:#848484;"></div>
<svg style="left:7.5px;top:430.5px;" width="29" height="29"><rect x="0" y="0" width="29" height="28.5" fill="#c4c4c4"/><rect x="1.8" y="1.8" width="25.4" height="24.9" fill="none" stroke="#3a3a3a" stroke-width="0.8"/><path d="M14.5 6.92 l3.4 2.38 l-3.4 2.38 l-3.4 -2.38 Z" fill="#2b2b2b"/><path d="M9 11.92 l3.4 2.38 l-3.4 2.38 l-3.4 -2.38 Z" fill="#2b2b2b"/><path d="M20 11.92 l3.4 2.38 l-3.4 2.38 l-3.4 -2.38 Z" fill="#2b2b2b"/><path d="M14.5 16.92 l3.4 2.38 l-3.4 2.38 l-3.4 -2.38 Z" fill="#2b2b2b"/></svg>
<svg style="left:7.5px;top:468px;" width="29" height="29"><rect x="0.5" y="0.5" width="12.6" height="12" fill="#3a3a3a" stroke="#c4c4c4" stroke-width="1"/><rect x="15.4" y="0" width="13.6" height="13" fill="#c4c4c4"/><rect x="0.5" y="15.5" width="12.6" height="12" fill="#3a3a3a" stroke="#c4c4c4" stroke-width="1"/><rect x="15.9" y="15.5" width="12.6" height="12" fill="#3a3a3a" stroke="#c4c4c4" stroke-width="1"/><path d="M3.8 6.5 h6 M6.8 3.5 v6" stroke="#c4c4c4" stroke-width="1"/><path d="M22.2 4.26 l3.2 2.24 l-3.2 2.24 l-3.2 -2.24 Z" fill="#2b2b2b"/><path d="M3.8 21.5 h6 M6.8 18.5 v6" stroke="#c4c4c4" stroke-width="1"/><path d="M19.2 21.5 h6 M22.2 18.5 v6" stroke="#c4c4c4" stroke-width="1"/></svg>
<svg style="left:7.5px;top:504.5px;" width="29" height="29"><rect x="0.5" y="0.5" width="12.6" height="27.4" fill="#3a3a3a" stroke="#c4c4c4" stroke-width="1"/><rect x="15.4" y="0" width="13.6" height="28.4" fill="#c4c4c4"/><path d="M22.2 11.96 l3.2 2.24 l-3.2 2.24 l-3.2 -2.24 Z" fill="#2b2b2b"/><path d="M3.5 9.5 H10 M5.5 13 H10 M5.5 15.5 H10 M5.5 18 H10 M3.5 13 h1 M3.5 15.5 h1 M3.5 18 h1" stroke="#c4c4c4" stroke-width="0.9"/></svg>
<svg style="left:7.5px;top:541.7px;" width="29" height="29"><rect x="0" y="0" width="29" height="13.2" fill="#c4c4c4"/><path d="M14.5 4.36 l3.2 2.24 l-3.2 2.24 l-3.2 -2.24 Z" fill="#2b2b2b"/><rect x="0.5" y="15.7" width="28" height="12.4" fill="#3a3a3a" stroke="#c4c4c4" stroke-width="1"/><path d="M3 18.7 h2 M3 21.7 h2 M3 24.7 h2" stroke="#c4c4c4" stroke-width="0.8"/><path d="M6.5 24.2 Q10 17.2 13 21.7 T19.5 24.2 T26 20.2" fill="none" stroke="#45b5c4" stroke-width="1"/><path d="M10 23.2 h5 M12.5 20.7 v5" stroke="#c4c4c4" stroke-width="0.9"/><path d="M19.5 23.2 h3" stroke="#c4c4c4" stroke-width="0.9"/></svg>
<svg style="left:7.5px;top:578.8px;" width="29" height="29"><rect x="0.5" y="0.5" width="12.6" height="27.4" fill="#3a3a3a" stroke="#c4c4c4" stroke-width="1"/><rect x="15.4" y="0" width="13.6" height="28.4" fill="#c4c4c4"/><path d="M22.2 11.96 l3.2 2.24 l-3.2 2.24 l-3.2 -2.24 Z" fill="#2b2b2b"/><path d="M4 3.5 h2.4 v2.4 h-2.4z M8 3.5 h2.4 v2.4 h-2.4z M4 8 h2.4 v2.4 h-2.4z M8 8 h2.4 v2.4 h-2.4z M4 12.5 h2.4 v2.4 h-2.4z M8 12.5 h2.4 v2.4 h-2.4z M5.2 6 v2 M9.2 6 v2 M5.2 10.4 v2 M9.2 10.4 v2 M4.5 19 h5 v4.5 h-5z" fill="none" stroke="#c4c4c4" stroke-width="0.8"/></svg>
<svg style="left:7.5px;top:615.5px;" width="29" height="29"><rect x="0" y="0" width="13.6" height="13.2" fill="#c4c4c4"/><path d="M6.8 4.36 l3.2 2.24 l-3.2 2.24 l-3.2 -2.24 Z" fill="#2b2b2b"/><rect x="15.9" y="0.5" width="12.6" height="12.2" fill="#3a3a3a" stroke="#c4c4c4" stroke-width="1"/><rect x="17.5" y="2.8" width="5.5" height="3" fill="none" stroke="#45b5c4" stroke-width="0.9"/><rect x="21" y="7.6" width="5.5" height="3" fill="none" stroke="#c4c4c4" stroke-width="0.9"/><path d="M19 6 V9 H21" fill="none" stroke="#c4c4c4" stroke-width="0.7"/><rect x="0.5" y="15.7" width="28" height="12.4" fill="#3a3a3a" stroke="#c4c4c4" stroke-width="1"/><path d="M3 18.7 h2 M3 21.7 h2 M3 24.7 h2" stroke="#c4c4c4" stroke-width="0.8"/><path d="M6.5 24.2 Q10 17.2 13 21.7 T19.5 24.2 T26 20.2" fill="none" stroke="#45b5c4" stroke-width="1"/><path d="M10 23.2 h5 M12.5 20.7 v5" stroke="#c4c4c4" stroke-width="0.9"/><path d="M19.5 23.2 h3" stroke="#c4c4c4" stroke-width="0.9"/></svg>
<div style="left:6px;top:650px;width:30px;height:29.5px;background:#3a3a3a;border:1px solid #2c2c2c;box-sizing:border-box;"></div>
<svg style="left:19.5px;top:663.5px;" width="5" height="3"><path d="M0 0 H5 L2.5 3 Z" fill="#d8d8d8"/></svg>
<svg style="left:0px;top:860px;" width="46" height="46"><defs><linearGradient id="lgL" x1="0" y1="0" x2="1" y2="0"><stop offset="0" stop-color="#35eaea"/><stop offset="1" stop-color="#22c4c4"/></linearGradient></defs><path d="M12.3 24.5 L21.9 12 L31.5 24.5 V29 L21.9 39.3 L12.3 29 Z" fill="#127676"/><path d="M21.9 11 L5.9 20.1 L12.3 26.5 L21.9 13 Z" fill="#1b9d9d"/><path d="M21.9 11 L38.2 20.1 L31.5 26.5 L21.9 13 Z" fill="#148888"/><path d="M21.9 12 L12.3 24.5 L14.8 31 L19.4 20 Z" fill="#0f6c6c"/><path d="M21.9 12 L31.5 24.5 L29.2 31 L24.6 20 Z" fill="#0a5757"/><path d="M21.9 12 L17 25 L21.9 33.5 L27 25 Z" fill="#158282"/><path d="M5.9 20.1 L12.3 24.5 V40.1 H5.9 Z" fill="url(#lgL)"/><path d="M31.5 24.5 L38.2 20.1 V40.1 H31.5 Z" fill="#189a9a"/><path d="M12.3 26 L15.5 29.6 L21.9 33.6 L28.3 29.6 L31.5 26 V29 L21.9 39.3 L12.3 29 Z" fill="#25bcbc"/><path d="M15.5 29.6 L21.9 33.6 L28.3 29.6 L21.9 39.3 Z" fill="#2accca"/></svg>
<div style="left:45px;top:142px;width:1431px;height:763.5px;background:#444444;border:1px solid #828282;box-sizing:border-box;"></div>
<span class="t" style="left:54.2px;top:145.19px;font-size:11px;line-height:14px;color:#c8c8c8;letter-spacing:0.452px;">View</span>
<span class="t" style="left:94.2px;top:145.19px;font-size:11px;line-height:14px;color:#c8c8c8;letter-spacing:0.355px;">Shading</span>
<span class="t" style="left:152.5px;top:145.19px;font-size:11px;line-height:14px;color:#c8c8c8;letter-spacing:0.567px;">Lighting</span>
<span class="t" style="left:210px;top:145.19px;font-size:11px;line-height:14px;color:#c8c8c8;letter-spacing:0.561px;">Show</span>
<span class="t" style="left:254.2px;top:145.19px;font-size:11px;line-height:14px;color:#c8c8c8;letter-spacing:0.106px;">Renderer</span>
<span class="t" style="left:315.8px;top:145.19px;font-size:11px;line-height:14px;color:#c8c8c8;letter-spacing:-0.227px;">Panels</span>
<div style="left:49.2px;top:163px;width:1px;height:17px;background:#6a6a6a;"></div>
<div style="left:48.2px;top:167px;width:3px;height:9px;background:#7a7a7a;border-radius:1px;"></div>
<svg style="left:58.5px;top:166.5px;" width="15" height="10"><rect x="0" y="1" width="9" height="7.5" rx="1" fill="#c8c8c8"/><path d="M9.8 4.8 L14.5 0.5 V9.5 Z" fill="#c8c8c8"/></svg>
<svg style="left:79px;top:164px;" width="15" height="14"><rect x="4" y="1.5" width="6" height="5" fill="#c8c8c8"/><path d="M10.5 4 L14.5 0.5 V8 Z" fill="#c8c8c8"/><circle cx="4.5" cy="9.5" r="3.2" fill="none" stroke="#45b5c4" stroke-width="1.5"/><circle cx="4.5" cy="9.5" r="4.3" fill="none" stroke="#45b5c4" stroke-width="1" stroke-dasharray="1.4 1.3"/></svg>
<svg style="left:102.5px;top:165px;" width="7" height="12"><path d="M0.3 0.3 H6.5 V11.5 L3.4 8 L0.3 11.5 Z" fill="#c8c8c8"/></svg>
<svg style="left:118.5px;top:164px;" width="15" height="15"><path d="M4.5 10 L8.5 0.5 V10.5 Z" fill="#45b5c4"/><path d="M8.5 0.5 L9.6 1 V10.8 L8.5 10.5Z" fill="#2b8a96"/><path d="M0.5 14.3 L3 10.5 H13.8 L12 14.3 Z M2 12.3 H12.8" fill="none" stroke="#c8c8c8" stroke-width="0.9"/></svg>
<svg style="left:139.5px;top:164px;" width="15" height="15"><path d="M5.5 0.5 V10.5 M0.5 6 H8.5 M5.5 0.3 L3.7 2.5 H7.3Z M0.3 6 L2.5 4.2 V7.8Z M5.5 12 L3.7 10 H7.3Z" stroke="#c8c8c8" stroke-width="1" fill="#c8c8c8"/><circle cx="10.3" cy="8.2" r="2.7" fill="none" stroke="#45b5c4" stroke-width="1.4"/><path d="M8.4 10.2 L5.5 13.7" stroke="#45b5c4" stroke-width="1.8"/></svg>
<svg style="left:159.5px;top:164px;" width="14" height="15"><path d="M4 8.5 L10.2 1 L12.6 3 L6.4 10.5 Z" fill="#c8c8c8"/><path d="M3.6 9.2 L5.8 11 L2 12.8 Z" fill="#45b5c4"/><path d="M8 12.8 Q11 14.2 12.5 11" fill="none" stroke="#c8c8c8" stroke-width="0.9"/><circle cx="1.6" cy="13" r="1.2" fill="#45b5c4"/></svg>
<div style="left:180px;top:163px;width:1px;height:17px;background:#6a6a6a;"></div>
<div style="left:179px;top:167px;width:3px;height:9px;background:#7a7a7a;border-radius:1px;"></div>
<div style="left:188px;top:162px;width:19px;height:19px;background:#5285a6;border-radius:2px;"></div>
<svg style="left:191px;top:165px;" width="13" height="13"><rect x="0.5" y="0.5" width="12" height="12" fill="none" stroke="#eee" stroke-width="1"/><path d="M4.5 0.5 V12.5 M8.5 0.5 V12.5 M0.5 4.5 H12.5 M0.5 8.5 H12.5" stroke="#eee" stroke-width="1"/></svg>
<svg style="left:209.5px;top:165px;" width="15" height="13"><rect x="0.5" y="0.5" width="14" height="12" fill="none" stroke="#c8c8c8" stroke-width="1"/><path d="M0.5 2.6 H14.5 M0.5 10.4 H14.5" stroke="#c8c8c8" stroke-width="0.8"/><path d="M1.5 1.6 H14 M1.5 11.5 H14" stroke="#c8c8c8" stroke-width="1" stroke-dasharray="1.4 1.4"/></svg>
<svg style="left:229.5px;top:165px;" width="15" height="13"><rect x="0.5" y="0.5" width="14" height="12" fill="none" stroke="#c8c8c8" stroke-width="1"/><circle cx="7.5" cy="6.5" r="2.8" fill="#45b5c4"/></svg>
<div style="left:248px;top:162px;width:18px;height:19px;background:#3a3a3a;border-radius:2px;border:1px solid #2a2a2a;box-sizing:border-box;"></div>
<svg style="left:251px;top:165.5px;" width="12" height="12"><circle cx="6" cy="6" r="3.6" fill="#555"/></svg>
<svg style="left:269.5px;top:165px;" width="15" height="13"><rect x="0.5" y="0.5" width="14" height="12" fill="none" stroke="#c8c8c8" stroke-width="1"/><path d="M1.5 6.5 H13.5 M7.5 1.5 V11.5" stroke="#45b5c4" stroke-width="1.6" stroke-dasharray="1.2 1"/></svg>
<svg style="left:289.5px;top:165px;" width="15" height="13"><rect x="0.5" y="0.5" width="14" height="12" fill="none" stroke="#c8c8c8" stroke-width="1"/><path d="M3.2 9.6 L5.6 6.2 L8 9.6 Z" fill="#45b5c4"/><circle cx="9.5" cy="5.2" r="1.8" fill="#45b5c4"/></svg>
<svg style="left:309.5px;top:165px;" width="15" height="13"><rect x="0.5" y="0.5" width="14" height="12" fill="none" stroke="#c8c8c8" stroke-width="1"/><path d="M4 3.5 H11 V5.5 H8.6 V10 H6.4 V5.5 H4 Z" fill="#45b5c4"/></svg>
<div style="left:330.5px;top:163px;width:1px;height:17px;background:#6a6a6a;"></div>
<div style="left:329.5px;top:167px;width:3px;height:9px;background:#7a7a7a;border-radius:1px;"></div>
<svg style="left:341px;top:164px;" width="14" height="15"><path d="M7 0.7 L13.3 3.8 V11 L7 14.3 L0.7 11 V3.8 Z M0.7 3.8 L7 7 L13.3 3.8 M7 7 V14.3" fill="none" stroke="#45b5c4" stroke-width="1.1" stroke-linejoin="round"/></svg>
<div style="left:359px;top:162px;width:19px;height:19px;background:#5285a6;border-radius:2px;"></div>
<svg style="left:361.5px;top:164px;" width="14" height="15"><path d="M7 0.7 L13.3 3.8 V11 L7 14.3 L0.7 11 V3.8 Z" fill="#9a9a9a"/><path d="M7 0.7 L13.3 3.8 L7 7 L0.7 3.8Z" fill="#e4e4e4"/><path d="M7 7 L13.3 3.8 V11 L7 14.3Z" fill="#6e6e6e"/></svg>
<svg style="left:382px;top:165px;" width="13" height="13"><path d="M6.5 0.5 A6 6 0 0 0 6.5 12.5 Z" fill="#c8c8c8"/><path d="M6.5 0.5 A6 6 0 0 1 6.5 12.5 Z" fill="#3a3a3a"/><path d="M6.5 2.5 h2 v2 h-2z M8.5 4.5 h2 v2 h-2z M6.5 6.5 h2 v2 h-2z M8.5 8.5 h2 v2 h-2z M10.5 6.5 h1.7 v2 h-1.7z" fill="#c8c8c8"/></svg>
<svg style="left:401.5px;top:164px;" width="14" height="15"><path d="M7 0.7 L13.3 3.8 V11 L7 14.3 L0.7 11 V3.8 Z M0.7 3.8 L7 7 L13.3 3.8 M7 7 V14.3" fill="none" stroke="#45b5c4" stroke-width="1.1" stroke-linejoin="round"/><path d="M3.5 6.8 L7 8.6 L10.5 6.8 V10 L7 12 L3.5 10 Z" fill="#c8c8c8"/></svg>
<div style="left:419px;top:162px;width:19px;height:19px;background:#5285a6;border-radius:2px;"></div>
<svg style="left:421.5px;top:164.5px;" width="14" height="14"><defs><pattern id="chk" width="6" height="6" x="1" y="1" patternUnits="userSpaceOnUse"><rect width="6" height="6" fill="#e8e8e8"/><rect width="3" height="3" fill="#222"/><rect x="3" y="3" width="3" height="3" fill="#222"/></pattern></defs><circle cx="7" cy="7" r="6.5" fill="url(#chk)"/></svg>
<svg style="left:441px;top:163.5px;" width="14" height="16"><path d="M7 3 Q11 3 11 7 Q11 9 9 10.5 V12 H5 V10.5 Q3 9 3 7 Q3 3 7 3Z" fill="#c8c8c8"/><rect x="5.3" y="12.8" width="3.4" height="1.6" fill="#c8c8c8"/><path d="M7 0 V1.6 M1.2 2.2 L2.5 3.4 M12.8 2.2 L11.5 3.4 M0 7.5 H1.6 M12.4 7.5 H14" stroke="#c8c8c8" stroke-width="1"/></svg>
<svg style="left:461px;top:165px;" width="15" height="13"><circle cx="9.5" cy="5.5" r="5" fill="#45b5c4"/><path d="M0.5 9 L4.5 11.5 M2 7.5 L6 10 M3.5 6 L6.5 8" stroke="#c8c8c8" stroke-width="1.1"/></svg>
<div style="left:481.5px;top:163px;width:1px;height:17px;background:#6a6a6a;"></div>
<div style="left:480.5px;top:167px;width:3px;height:9px;background:#7a7a7a;border-radius:1px;"></div>
<svg style="left:492px;top:164px;" width="14" height="15"><path d="M2 5.5 Q2 0.5 7 0.5 Q12 0.5 12 5.5 Q12 8 10.5 9 V11 H3.5 V9 Q2 8 2 5.5Z" fill="#c8c8c8"/><path d="M0.5 11.5 L7 14 L13.5 11.5 M2.5 9.5 L7 11.5 L11.5 9.5" fill="none" stroke="#45b5c4" stroke-width="0.9"/></svg>
<svg style="left:511.5px;top:165.5px;" width="15" height="12"><path d="M3.5 1 A5.5 5.5 0 0 0 3.5 11 M6 1 A5.5 5.5 0 0 0 6 11" fill="none" stroke="#c8c8c8" stroke-width="1"/><circle cx="9.5" cy="6" r="5" fill="#c8c8c8"/></svg>
<svg style="left:532.5px;top:165px;" width="13" height="13"><circle cx="6.5" cy="6.5" r="5.2" fill="none" stroke="#c8c8c8" stroke-width="1.6" stroke-dasharray="2 1.6"/><path d="M6.5 1.3 A5.2 5.2 0 0 1 6.5 11.7" fill="none" stroke="#45b5c4" stroke-width="1.8"/></svg>
<div style="left:550px;top:162px;width:18px;height:19px;background:#3a3a3a;border-radius:2px;border:1px solid #2a2a2a;box-sizing:border-box;"></div>
<svg style="left:552.5px;top:164.5px;" width="13" height="14"><rect x="0.5" y="4.5" width="8" height="8" fill="#3e555a"/><path d="M5 1 H12 V9" fill="none" stroke="#4a4a4a" stroke-width="1.5" stroke-dasharray="1.5 1"/></svg>
<div style="left:572.5px;top:163px;width:1px;height:17px;background:#6a6a6a;"></div>
<div style="left:571.5px;top:167px;width:3px;height:9px;background:#7a7a7a;border-radius:1px;"></div>
<svg style="left:583px;top:164px;" width="15" height="15"><path d="M0.8 0.8 H8 V3 M0.8 0.8 V7.5 H3" fill="none" stroke="#45b5c4" stroke-width="1.3" stroke-dasharray="2.4 1.4"/><path d="M7 4 L7 13 L9.2 11 L10.8 14.5 L12.4 13.8 L10.8 10.4 L13.8 10.4 Z" fill="#d8d8d8"/></svg>
<div style="left:603.5px;top:163px;width:1px;height:17px;background:#6a6a6a;"></div>
<div style="left:602.5px;top:167px;width:3px;height:9px;background:#7a7a7a;border-radius:1px;"></div>
<svg style="left:614.5px;top:165px;" width="13" height="13"><rect x="3.5" y="0.5" width="9" height="8" fill="#444" stroke="#c8c8c8" stroke-width="1.6"/><rect x="0.8" y="4" width="8.5" height="8" fill="#444" stroke="#c8c8c8" stroke-width="1.6"/></svg>
<svg style="left:634.5px;top:164.5px;" width="14" height="14"><rect x="0" y="6" width="8" height="8" fill="#45b5c4"/><rect x="4.5" y="0.8" width="8.5" height="8.5" fill="#444" stroke="#c8c8c8" stroke-width="1.3"/><rect x="7.8" y="4" width="2.4" height="2.4" fill="#c8c8c8"/></svg>
<svg style="left:654.5px;top:165px;" width="13" height="13"><rect x="0.5" y="0.5" width="12" height="12" fill="none" stroke="#c8c8c8" stroke-width="1"/><circle cx="5" cy="5" r="1.8" fill="#45b5c4"/><path d="M5.5 5.5 L9.5 10" stroke="#45b5c4" stroke-width="1.8"/></svg>
<div style="left:674.9px;top:163px;width:1px;height:17px;background:#6a6a6a;"></div>
<div style="left:673.9px;top:167px;width:3px;height:9px;background:#7a7a7a;border-radius:1px;"></div>
<svg style="left:684.3px;top:162.5px;" width="19" height="18"><path d="M4 1.1 H1.1 V16.9 H4 M15 1.1 H17.9 V16.9 H15" fill="none" stroke="#141414" stroke-width="3.4" stroke-linecap="square"/><path d="M4 1.1 H1.1 V16.9 H4 M15 1.1 H17.9 V16.9 H15" fill="none" stroke="#00ff00" stroke-width="2.2"/></svg>
<svg style="left:687.5px;top:165px;" width="13" height="13"><circle cx="6.5" cy="6.5" r="6" fill="#c8c8c8"/><path d="M6.5 3 L9.5 4.8 V8.2 L6.5 10 L3.5 8.2 V4.8 Z" fill="#444"/><path d="M6.5 0.5 L6.5 3 M12 3.5 L9.5 4.8 M12 9.5 L9.5 8.2 M6.5 12.5 V10 M1 9.5 L3.5 8.2 M1 3.5 L3.5 4.8" stroke="#444" stroke-width="0.9"/></svg>
<div style="left:705px;top:162.5px;width:38px;height:18px;background:#2b2b2b;border-radius:2px;"></div>
<span class="t" style="left:710.5px;top:164.09px;font-size:11px;line-height:14px;color:#d0d0d0;letter-spacing:-0.303px;">0.00</span>
<svg style="left:746px;top:162.5px;" width="19" height="18"><path d="M4 1.1 H1.1 V16.9 H4 M15 1.1 H17.9 V16.9 H15" fill="none" stroke="#141414" stroke-width="3.4" stroke-linecap="square"/><path d="M4 1.1 H1.1 V16.9 H4 M15 1.1 H17.9 V16.9 H15" fill="none" stroke="#00ff00" stroke-width="2.2"/></svg>
<svg style="left:749px;top:165px;" width="13" height="13"><rect x="1" y="1" width="11" height="11" fill="#c8c8c8"/><circle cx="6.5" cy="6.5" r="3.8" fill="#444"/><path d="M6.5 2.7 A3.8 3.8 0 0 1 6.5 10.3Z" fill="#c8c8c8"/></svg>
<div style="left:767px;top:162.5px;width:38px;height:18px;background:#2b2b2b;border-radius:2px;"></div>
<span class="t" style="left:772.5px;top:164.09px;font-size:11px;line-height:14px;color:#d0d0d0;letter-spacing:-0.403px;">1.00</span>
<div style="left:808px;top:162px;width:19px;height:19px;background:#5285a6;border-radius:2px;"></div>
<svg style="left:810.5px;top:164.5px;" width="14" height="14"><circle cx="7" cy="7" r="6.2" fill="#45b5c4" stroke="#2f6f7a" stroke-width="0.8"/><text x="7" y="9" font-size="5.4" font-weight="bold" text-anchor="middle" fill="#1d5a64" font-family="Liberation Sans,sans-serif">ON</text></svg>
<div style="left:830px;top:162px;width:138px;height:18px;background:#5d5d5d;border-radius:2px;"></div>
<div style="left:948px;top:162px;width:1px;height:18px;background:#4c4c4c;"></div>
<span class="t" style="left:833.5px;top:164.09px;font-size:11px;line-height:14px;color:#e4e4e4;letter-spacing:-0.430px;">sRGB gamma</span>
<svg style="left:953.5px;top:168.5px;" width="9" height="5"><path d="M0 0 L9 0 L4.5 5 Z" fill="#d0d0d0"/></svg>
<div style="left:46px;top:182px;width:1429px;height:722px;background:#5d5d5d;overflow:hidden;"><svg style="left:0;top:0" width="1429" height="722" viewBox="46 182 1429 722">
<defs>
<linearGradient id="gTop" x1="0" y1="0" x2="1" y2="1"><stop offset="0" stop-color="#b4b4b4"/><stop offset="0.5" stop-color="#c9c9c9"/><stop offset="1" stop-color="#dadada"/></linearGradient>
<linearGradient id="gRidge" x1="0" y1="0" x2="0" y2="1"><stop offset="0" stop-color="#ffffff" stop-opacity="0"/><stop offset="0.45" stop-color="#ffffff" stop-opacity="0.95"/><stop offset="1" stop-color="#ffffff" stop-opacity="0"/></linearGradient>
<linearGradient id="gFront" x1="0" y1="0" x2="1" y2="0"><stop offset="0" stop-color="#dcdcdc"/><stop offset="0.12" stop-color="#d0d0d0"/><stop offset="0.62" stop-color="#c9c9c9"/><stop offset="0.86" stop-color="#bcbcbc"/><stop offset="1" stop-color="#8c8c8c"/></linearGradient>
<linearGradient id="gBase" x1="0" y1="0" x2="0" y2="1"><stop offset="0" stop-color="#e0e0e0"/><stop offset="0.6" stop-color="#d2d2d2"/><stop offset="1" stop-color="#b8b8b8"/></linearGradient>
<linearGradient id="gInner" gradientUnits="userSpaceOnUse" x1="438" y1="730" x2="474" y2="716"><stop offset="0" stop-color="#f0f0f0"/><stop offset="0.3" stop-color="#c4c4c4"/><stop offset="0.62" stop-color="#5a5a5a"/><stop offset="0.9" stop-color="#090909"/></linearGradient>
<linearGradient id="gLeg" x1="0" y1="0" x2="0" y2="1"><stop offset="0" stop-color="#d8d8d8"/><stop offset="0.45" stop-color="#ffffff"/><stop offset="1" stop-color="#c0c0c0"/></linearGradient>
<linearGradient id="gCyl" x1="0" y1="0" x2="1" y2="0"><stop offset="0" stop-color="#8e8e8e"/><stop offset="0.45" stop-color="#efefef"/><stop offset="1" stop-color="#a2a2a2"/></linearGradient>
<linearGradient id="gCylH" x1="0" y1="0" x2="0" y2="1"><stop offset="0" stop-color="#a8a8a8"/><stop offset="0.4" stop-color="#f4f4f4"/><stop offset="1" stop-color="#9a9a9a"/></linearGradient>
<linearGradient id="gRB" x1="0" y1="0" x2="1" y2="0"><stop offset="0" stop-color="#151515"/><stop offset="0.07" stop-color="#8a8a8a"/><stop offset="0.3" stop-color="#c4c4c4"/><stop offset="0.75" stop-color="#cccccc"/><stop offset="1" stop-color="#a0a0a0"/></linearGradient>
<pattern id="dots" width="3" height="3.2" patternUnits="userSpaceOnUse"><rect width="3" height="3.2" fill="#474747"/><rect x="0.8" y="1" width="1.4" height="0.9" fill="#8a8a8a"/></pattern>
</defs>
<polygon points="258.3,835.2 639,845 664.2,690.4 340,684" fill="none" stroke="#2b2b2b" stroke-width="1.8" />
<polygon points="478.5,750 554.1,751.2 557.6,737.4 601.2,759.2 561,775.2 549.6,766 470,764" fill="none" stroke="#a9a9a9" stroke-width="1.2" />
<ellipse cx="582.8" cy="724.1" rx="13.8" ry="9.2" fill="none" stroke="#a9a9a9" stroke-width="1.2" />
<ellipse cx="326" cy="837.5" rx="16" ry="9.6" fill="none" stroke="#a9a9a9" stroke-width="1.2" />
<ellipse cx="553" cy="842" rx="16" ry="11" fill="none" stroke="#a9a9a9" stroke-width="1.2" />
<polygon points="692.2,745 750.2,746.5 748.1,783.4 687.2,782.2" fill="url(#dots)" />
<ellipse cx="329.4" cy="814.5" rx="12.6" ry="10" fill="#101010"/><ellipse cx="535.8" cy="819.1" rx="12.6" ry="10" fill="#101010"/><circle cx="567.9" cy="701.9" r="11.5" fill="#101010"/>
<polygon points="297.3,799 565.6,796 565.6,803 552,812 522,820.3 345.5,815.7 312,813 298,806" fill="#161616" />
<polygon points="340.9,671 308.8,730.5 295,760.3 294.5,781.3 297.3,800.1 423.4,804.2 556.4,806 565.6,798.5 565.6,785.5 556.4,776.4 492.2,760.3 446.4,751.1 437.2,739.7 441.8,725.9 460.1,698.4 483.1,688.1 579.4,689.2 593.1,684.7 593.1,673.2 579.4,661.7 469.3,643.4 416.6,641.1 404,641 404,671" fill="url(#gBase)" />
<polygon points="483.1,688.1 579.4,689.2 575,699 494,700.5 480,706 468,720 460,738 453,753 446.4,751.1 437.2,739.7 441.8,725.9 460.1,698.4" fill="url(#gInner)" />
<polygon points="470,650 575,668 588,676 586,682 480,664" fill="#f8f8f8" stroke="none" stroke-width="0" opacity="0.9"/>
<polygon points="418,642.5 469,645 479,652 440,668 424,680" fill="#d6d6d6" />
<polygon points="334,766.5 430,768 556,786.5 563,795 430,779.5 334,776" fill="#fbfbfb" stroke="none" stroke-width="0" opacity="0.95"/>
<polygon points="318,708 426,711 430,716 428,762 305,760 302,752" fill="#d9d9d9" stroke="#9a9a9a" stroke-width="0.6" />
<polygon points="342,684 422.3,682 428,690 426,700 340,708 330,704" fill="#e9e9e9" />
<polygon points="327.1,583.8 405.1,575.7 422.3,682.4 342,684.7" fill="#000" />
<polygon points="342.5,789 353,789.5 352.5,798.5 343,798" fill="#1a1a1a" />
<path d="M344.5 791 L347.5 796.5 L351.5 790.5" stroke="#ddd" stroke-width="1" fill="none"/>
<text x="357" y="797.5" fill="#9a9a9a" font-size="8.5" font-family="Liberation Sans,sans-serif" textLength="33" transform="rotate(1.5 357 797)">versius</text>
<path d="M381.1 691.5 H390.1 M385.6 687.0 V696.0" stroke="#a01830" stroke-width="1" fill="none"/>
<path d="M327.2 807.2 H336.2 M331.7 802.7 V811.7" stroke="#a01830" stroke-width="1" fill="none"/>
<path d="M532.9 811.5 H541.9 M537.4 807.0 V816.0" stroke="#a01830" stroke-width="1" fill="none"/>
<path d="M565.5 694 H574.5 M570 689.5 V698.5" stroke="#a01830" stroke-width="1" fill="none"/>
<polyline points="330,808 315,838" fill="none" stroke="#1a1aff" stroke-width="1.2" />
<polyline points="332,823.7 332,846" fill="none" stroke="#00e000" stroke-width="1.4" />
<polyline points="537,813 529,842" fill="none" stroke="#1a1aff" stroke-width="1.2" />
<polyline points="536.6,828 536.6,851.5" fill="none" stroke="#00e000" stroke-width="1.4" />
<polyline points="568,697 562,723" fill="none" stroke="#1a1aff" stroke-width="1.2" />
<polyline points="566.5,706 566.5,733" fill="none" stroke="#00e000" stroke-width="1.4" />
<text x="310" y="844" fill="#1a1aff" font-size="13" font-family="Liberation Sans,sans-serif" >z</text>
<text x="523.5" y="849" fill="#1a1aff" font-size="13" font-family="Liberation Sans,sans-serif" >z</text>
<text x="555.5" y="729.5" fill="#1a1aff" font-size="13" font-family="Liberation Sans,sans-serif" >z</text>
<text x="329.5" y="851" fill="#00e000" font-size="10" font-family="Liberation Sans,sans-serif" transform="rotate(25 332 848)">y</text>
<text x="533.5" y="856" fill="#00e000" font-size="10" font-family="Liberation Sans,sans-serif" transform="rotate(25 536 853)">y</text>
<text x="562" y="739" fill="#00e000" font-size="11" font-family="Liberation Sans,sans-serif" >y</text>
<text x="278" y="804" fill="#ee1111" font-size="14" font-family="Liberation Sans,sans-serif" >x</text>
<polyline points="291,800.5 297,801.5" fill="none" stroke="#ee1111" stroke-width="1.2" />
<polygon points="393,462 402,418 411,440 414,470 416,552 396,552" fill="#060606" />
<polygon points="371,553 390,551.3 423,555.4 444.5,560.4 569.9,563.7 596.3,571.9 591.3,581 439.5,584.3 406.5,573.6 371,576" fill="#0b0b0b" />
<polyline points="446,566 575,568.5" fill="none" stroke="#474747" stroke-width="1.3" />
<polyline points="408,571 440,581" fill="none" stroke="#333" stroke-width="1" />
<polygon points="583.9,517.5 604.5,519.1 606,524 596.3,573 590,580 570.7,562" fill="#131313" />
<polyline points="585,519.5 603,521.5" fill="none" stroke="#5a5a5a" stroke-width="1.1" />
<polyline points="573,561 594,569" fill="none" stroke="#5a5a5a" stroke-width="1.1" />
<polygon points="602.9,458.9 621,459.7 622.7,472.9 611.1,512.5 592.1,510.9 592.1,496" fill="#131313" />
<polyline points="594,497.5 609,499" fill="none" stroke="#6a6a6a" stroke-width="1.1" />
<polygon points="437.9,469.6 489,460.5 601.2,462.2 600,478 563.3,477.9 485.7,481.2 437.9,487.8" fill="#0b0b0b" />
<polyline points="440,472.5 489,463.5 560,464.5" fill="none" stroke="#3a3a3a" stroke-width="1.1" />
<polygon points="411.5,479.5 421,474 446,505 503.9,486.1 508.8,496 449.4,520 438,522" fill="#0b0b0b" />
<polygon points="402,521 413,517 430,547 475.8,527.4 482.4,537.3 437.9,557 424,556" fill="#0b0b0b" />
<polygon points="396,548 410,546 440,556 430,562 400,558" fill="#0b0b0b" />
<polygon points="404,486 414,483 420,497 410,500" fill="#d8d8d8" />
<polygon points="537.7,447.3 564.9,451.5 566.6,461.4 576.5,468 578.1,491 571.5,507.6 564.9,505.9 566.6,492.7 561.6,479.5 538.5,466.3 531.9,463" fill="#0e0e0e" />
<polygon points="513.8,494.4 561.6,496 563.3,504.3 551.7,507.6 550.1,520.8 545.1,519.1 543.5,507.6 515.4,505.9" fill="#121212" />
<polygon points="493.1,519.9 525.3,519.9 527,524.9 545.1,545.5 543.5,562 531.9,562 520.4,527.4 494,526.5" fill="#0e0e0e" />
<polygon points="493.1,537.3 522,535.6 522,542.2 503.9,543.9 503.9,562 497.3,562 495.6,543.9" fill="#121212" />
<polyline points="500,539.5 520,538.5" fill="none" stroke="#9a9a9a" stroke-width="1.2" />
<rect x="544" y="458" width="21" height="5.5" fill="#51616d" transform="rotate(8 544 458)"/><rect x="519" y="499.5" width="19" height="5.5" fill="#5d6d79" transform="rotate(3 519 499)"/>
<path d="M260.1 466 Q259.5 461 265.2 456.3 L287.9 426 L308.1 398.2 Q318 386 327 382.2 Q331 380.5 338 380.5 H347.2 L393 414 L401.6 415.9 L402.8 420.9 L394.5 461 L396 551 L276.1 553.2 Z" fill="url(#gTop)"/>
<path d="M260.1 466.4 L345 463 L372 464.5 Q384 462 391 452 L395.2 449 L396 551 L275.3 552.8 Z" fill="url(#gFront)"/>
<path d="M259.8 461.5 L345 458 L372 459.5 Q383 457 389.5 446 L400.5 417.5 L403 421 L395.5 454 Q389 468 372 470 L345 468.5 L260.5 472 Z" fill="url(#gRidge)"/>
<polyline points="260.6,465.6 345,462 372,463.4 384,459 391,449 401.6,418.5" fill="none" stroke="#fafafa" stroke-width="1.6" stroke-linejoin="round" stroke-linecap="round"/>
<polyline points="372,400 346.5,462 362,552" fill="none" stroke="#8f8f8f" stroke-width="0.7" stroke-dasharray="1.6 1.6"/>
<polygon points="276.1,553.2 396,550.5 396,574 280.5,575.1" fill="#131313" />
<polygon points="280.5,575.1 396,574 392,581.7 300,582.5 288.2,581.7" fill="#e4e4e4" />
<polygon points="352,584 368,584 367,588 354,588" fill="#222" />
<path d="M264.6 486.5 Q265 481 272 480.2 Q281 479.6 286 483 Q288 487 287 491.6 L268 493.4 Q265.4 491 264.6 486.5Z" fill="#0a0a0a"/>
<path d="M270.5 488.5 Q277 484.6 285.8 486 L286.6 491 L269.5 492.6Z" fill="#ececec"/><path d="M272 481.6 Q279 480.6 284 483.4 L277 484.6Z" fill="#8a8a8a"/>
<path d="M267.8 503.5 Q268 499.6 273 499 L289 497.6 L289.6 507.4 Q280 511 270.5 510.4 Q268 508 267.8 503.5Z" fill="#e9e9e9"/><path d="M268.4 505.5 Q278 508.6 289.4 505 L289.6 507.4 Q280 511 270.5 510.4Z" fill="#fbfbfb"/>
<text x="0" y="0" fill="#969696" font-size="11.5" font-family="Liberation Sans,sans-serif" transform="translate(353,476) rotate(75)" textLength="40">versius</text>
<polygon points="343.5,354 347,346 356,340 375.7,336.1 385.5,337.2 391,370 398.7,405 396,410 391,416 349.4,416 347,400" fill="#040404" />
<polygon points="349,416 391,416 393,420 350,421" fill="#f2f2f2" />
<polygon points="356,243.1 369.8,257.4 365.2,257.4 365.2,280.3 357,280.3 357,257.4 346.6,257.4" fill="none" stroke="#b4b4b4" stroke-width="0.8" stroke-dasharray="5 1.5"/>
<polygon points="423.4,287.3 438,302 432,302 432,324 423.4,324 423.4,301 414.4,301" fill="none" stroke="#b4b4b4" stroke-width="0.8" stroke-dasharray="5 1.5"/>
<path d="M387 314.3 Q408 312 409.6 306.6 Q409 302.5 396.5 303" fill="none" stroke="#a9a9a9" stroke-width="1.3"/>
<polygon points="428,455 437,450 441,498 432,500" fill="#050505" />
<polygon points="442.5,305.5 451.9,301.8 454,303 412.9,359.1 432.6,463.5 437,470 421,470 403,412.8 394.3,363.5" fill="#d4d4d4" />
<polygon points="394.3,363.5 412.9,359.1 432.6,463.5 421,470 403,412.8" fill="#e2e2e2" />
<rect x="396.0" y="368.0" width="1.8" height="4" fill="#111" transform="rotate(-10 396.0 368.0)"/>
<rect x="397.4" y="376.2" width="1.8" height="4" fill="#111" transform="rotate(-10 397.4 376.2)"/>
<rect x="398.9" y="384.4" width="1.8" height="4" fill="#111" transform="rotate(-10 398.9 384.4)"/>
<rect x="400.4" y="392.6" width="1.8" height="4" fill="#111" transform="rotate(-10 400.4 392.6)"/>
<rect x="401.8" y="400.8" width="1.8" height="4" fill="#111" transform="rotate(-10 401.8 400.8)"/>
<rect x="403.2" y="409.0" width="1.8" height="4" fill="#111" transform="rotate(-10 403.2 409.0)"/>
<rect x="404.7" y="417.2" width="1.8" height="4" fill="#111" transform="rotate(-10 404.7 417.2)"/>
<polygon points="412.9,359.1 453.4,302.7 457,330 464.3,398.5 433,462 430,452" fill="#000" />
<polyline points="414.5,360 453,306 462.5,398" fill="none" stroke="#2c2c2c" stroke-width="0.8" />
<ellipse cx="537.2" cy="428.7" rx="17.5" ry="7.9" fill="none" stroke="#a9a9a9" stroke-width="1.2" />
<ellipse cx="519.7" cy="472.7" rx="18" ry="8.2" fill="none" stroke="#a9a9a9" stroke-width="1.2" />
<polyline points="417.3,475.5 510.3,489.7" fill="none" stroke="#f2ee66" stroke-width="1.1" />
<polyline points="399.8,518.2 481.8,531.3" fill="none" stroke="#f2ee66" stroke-width="1.1" />
<polyline points="411,478 450,512 509,491" fill="none" stroke="#16a05a" stroke-width="0.9" />
<polyline points="404,522 436,550 481,533" fill="none" stroke="#16a05a" stroke-width="0.9" />
<polyline points="491.7,459 510.3,489.7" fill="none" stroke="#00e000" stroke-width="1.1" />
<polyline points="462,501.8 481.8,531.3" fill="none" stroke="#00e000" stroke-width="1.1" />
<polyline points="510.3,489.7 545.3,476.6" fill="none" stroke="#ee1111" stroke-width="1.1" />
<polyline points="481.8,531.3 492,527" fill="none" stroke="#ee1111" stroke-width="1.1" />
<polyline points="481.8,533.5 473,553.2" fill="none" stroke="#1a1aff" stroke-width="1.2" />
<circle cx="510.3" cy="489.7" r="5" fill="none" stroke="#16a05a" stroke-width="0.9"/><circle cx="481.8" cy="531.3" r="5" fill="none" stroke="#16a05a" stroke-width="0.9"/>
<path d="M505.8 489.7 H514.8 M510.3 485.2 V494.2" stroke="#f2ee66" stroke-width="1" fill="none"/>
<path d="M477.3 531.3 H486.3 M481.8 526.8 V535.8" stroke="#f2ee66" stroke-width="1" fill="none"/>
<text x="482" y="452.5" fill="#00e000" font-size="14" font-family="Liberation Sans,sans-serif" >y</text>
<text x="452.5" y="494" fill="#00e000" font-size="14" font-family="Liberation Sans,sans-serif" >y</text>
<text x="548" y="477" fill="#ee1111" font-size="14" font-family="Liberation Sans,sans-serif" >x</text>
<text x="519.5" y="517" fill="#ee1111" font-size="14" font-family="Liberation Sans,sans-serif" >x</text>
<text x="467" y="561" fill="#1a1aff" font-size="14" font-family="Liberation Sans,sans-serif" >z</text>
<polygon points="931.5,719.5 1040.7,723.2 1055.3,806.9 937.6,803.2" fill="none" stroke="#a9a9a9" stroke-width="1.1" />
<polygon points="928,727 1036,730 1050,787 934,785" fill="none" stroke="#a9a9a9" stroke-width="1.1" />
<ellipse cx="963.1" cy="796" rx="8.5" ry="6" fill="none" stroke="#a9a9a9" stroke-width="1.1" />
<ellipse cx="1029.8" cy="797.2" rx="8.5" ry="6" fill="none" stroke="#a9a9a9" stroke-width="1.1" />
<polygon points="948.5,783 1043.2,781 1043,791 950,793" fill="#101010" />
<polygon points="959.5,630 957,680 947.3,725.6 948.5,783.8 960,788 1030,787 1043.2,781.4 1039.5,725.6 1047,680 1052,640" fill="url(#gRB)" />
<path d="M961.9 652.8 Q975 660 993.4 660 L993.4 672 Q975 673 960.5 664 Z" fill="#141414"/><path d="M1022.5 662 Q1038 662 1050.5 655 L1049.2 668 Q1036 674 1022.5 673.5 Z" fill="#141414"/>
<rect x="980" y="740.2" width="40" height="28" rx="5" fill="none" stroke="#efefef" stroke-width="1"/><rect x="984" y="745" width="32" height="20" rx="3" fill="none" stroke="#b0b0b0" stroke-width="0.8"/><path d="M987 755 H1000 M1003 760 H1014" stroke="#f4f4f4" stroke-width="1"/>
<polyline points="1005,684 1004,700 1002,720 1001,735" fill="none" stroke="#555" stroke-width="0.8" stroke-dasharray="1 12"/>
<path d="M958.6 591 Q960 586 968 584.5 L985 583 Q1000 583 1012 586 L1050 600 Q1058 604 1058.5 614 L1058.4 628 Q1057 636 1050 637.5 L1005 640 L969 637 Q962 635 961 628 L958.4 598.8 Z" fill="#d3d3d3" stroke="#7c7c7c" stroke-width="0.6"/>
<polygon points="961,629 969,637 1005,640.5 1051,637.7 1058,629 1056,640 1049,645.5 1005,648.5 968,645 960.5,638" fill="#b2b2b2" />
<polyline points="962,631 969.5,638 1005,641.5 1051,638.7 1057.5,631" fill="none" stroke="#f2f2f2" stroke-width="1.4" />
<path d="M966 596 Q968 591 976 590 L1000 590 L1044 604 Q1050 607 1050 614 L1050 622 Q1048 629 1040 629.5 L1005 631 L976 629 Q969 627 968 620 Z" fill="#c4c4c4" stroke="#9a9a9a" stroke-width="0.5"/>
<path d="M966 616 L968 626 Q972 631 990 631 L992 622 Q980 620 975 614 Z M1030 622 Q1040 622 1048 616 L1050 624 Q1046 630 1030 631 Z" fill="#a9a9a9"/>
<path d="M978 588 Q992 584 1010 588 L1042 601 Q1052 607 1048 614 Q1040 620 1012 619 Q985 617 978 606 Q974 596 978 588Z" fill="#dcdcdc" stroke="#8a8a8a" stroke-width="0.6"/>
<ellipse cx="985.5" cy="591.5" rx="5.5" ry="2.6" fill="#2a2a2a"/><ellipse cx="981.5" cy="601" rx="2.6" ry="3.4" fill="#cc1a1a" transform="rotate(-30 981.5 601)"/><ellipse cx="990" cy="600" rx="3" ry="2" fill="#b4b4b4"/>
<ellipse cx="1016.7" cy="600.8" rx="18" ry="7.6" fill="#dadada" stroke="#0c0c0c" stroke-width="2.6"/>
<ellipse cx="1017.7" cy="597.9" rx="39.8" ry="20.4" fill="none" stroke="#9c9c9c" stroke-width="1.1" transform="rotate(6 1017.7 597.9)"/>
<polygon points="1008.3,562 1001.2,599 1016,606 1033.2,601 1037,562" fill="url(#gCyl)" />
<ellipse cx="1019.7" cy="555.3" rx="25" ry="25" fill="none" stroke="#9a9a9a" stroke-width="1.4" />
<polygon points="1018.6,477.3 1008.3,557.6 1006,572 1030,580 1038,557.6 1048.4,493.4" fill="url(#gCyl)" />
<polyline points="1013.5,510.6 1043.5,513" fill="none" stroke="#111" stroke-width="2" />
<text x="0" y="0" fill="#8a8a8a" font-size="7" font-family="Liberation Sans,sans-serif" transform="translate(1023,548) rotate(-82)" textLength="24">versius</text>
<ellipse cx="1029" cy="502" rx="19.5" ry="8" fill="none" stroke="#9a9a9a" stroke-width="1.4" />
<circle cx="1025.9" cy="578" r="14.4" fill="#d9d9d9" stroke="#6a6a6a" stroke-width="0.7"/>
<ellipse cx="1040.8" cy="460" rx="18" ry="18" fill="none" stroke="#9a9a9a" stroke-width="1.4" />
<polygon points="1017.5,478 1022,470 1035,462 1048,458 1056,470 1050,495 1030,490" fill="url(#gCyl)" />
<circle cx="1047.8" cy="482.3" r="12.4" fill="#dcdcdc" stroke="#7a7a7a" stroke-width="0.7"/>
<path d="M1051 451.6 Q1047.5 452 1047.6 456 L1048.5 470 Q1050 474 1056 474 L1111.6 474.3 L1111.6 453 Z" fill="url(#gCylH)"/>
<polygon points="1111.6,453.2 1114.3,453.9 1114.3,474.3 1111.6,474.3" fill="#d8d8d8" />
<polygon points="1114.3,453.9 1140,454.6 1140,474 1114.3,474.3" fill="#141414" />
<polyline points="1115,461.2 1140,461.6" fill="none" stroke="#6a6a6a" stroke-width="1.6" />
<polygon points="1140,454.6 1143.5,454.7 1143.5,474 1140,474" fill="#e0e0e0" />
<polygon points="1143.5,455.5 1148.8,455.6 1148.8,473.6 1143.5,473.8" fill="#141414" />
<polygon points="1148.8,455 1232.1,457.5 1240.1,465.4 1232.1,472.5 1148.8,473.4" fill="url(#gCylH)" />
<path d="M1161 458 L1178 459 L1182 463 L1176 470 L1161 470 Z" fill="#d0d0d0" stroke="#8a8a8a" stroke-width="0.5"/><path d="M1218 463.5 h9 v2 h-9z" fill="#333"/>
<path d="M1240.1 465.4 L1262 465.2 L1327.8 467.2 L1262 466.8 Z" fill="#1c1c1c" stroke="#1c1c1c" stroke-width="0.7"/>
<ellipse cx="1109" cy="464.1" rx="4.4" ry="20.8" fill="none" stroke="#8e8e8e" stroke-width="1.5" />
<ellipse cx="1194.9" cy="465.4" rx="6.2" ry="20.4" fill="none" stroke="#8e8e8e" stroke-width="1.5" />
<path d="M1163.9 442.8 Q1181 444 1187.8 454.8" fill="none" stroke="#9a9a9a" stroke-width="1.4"/>
<polygon points="1091.7,592.6 1108.2,609 1095.3,609 1095.3,628 1081.5,628 1081.5,609 1069.9,609" fill="none" stroke="#a9a9a9" stroke-width="1.2" />
<polygon points="1075.9,703.3 1091.7,716.8 1080,716.8 1080,734 1067.4,734 1067.4,716.8 1058.2,716.8" fill="none" stroke="#a9a9a9" stroke-width="1.0" />
<text x="1060.5" y="734" fill="#ee1111" font-size="14" font-family="Liberation Sans,sans-serif" >x</text>
<text x="1070" y="779" fill="#ee1111" font-size="14" font-family="Liberation Sans,sans-serif" >x</text>
<polyline points="1041,737.5 1056,732.5" fill="none" stroke="#ee1111" stroke-width="1.1" stroke-dasharray="6 3"/>
<polyline points="1044,784 1066,778" fill="none" stroke="#ee1111" stroke-width="1.1" stroke-dasharray="6 3"/>
<text x="933" y="711" fill="#1a1aff" font-size="13" font-family="Liberation Sans,sans-serif" >z</text>
<text x="941" y="757.5" fill="#1a1aff" font-size="13" font-family="Liberation Sans,sans-serif" >z</text>
<polyline points="941,713 948,726" fill="none" stroke="#1a1aff" stroke-width="1.1" />
<polyline points="948,759 954,771" fill="none" stroke="#1a1aff" stroke-width="1.1" />
<polyline points="948.5,708 951,713" fill="none" stroke="#00e000" stroke-width="1.6" />
<path d="M951.3 742.6 H960.3 M955.8 738.1 V747.1" stroke="#a01830" stroke-width="1" fill="none"/>
<path d="M1014.4 744.5 H1023.4 M1018.9 740.0 V749.0" stroke="#a01830" stroke-width="1" fill="none"/>
<path d="M956.9 787 H965.9 M961.4 782.5 V791.5" stroke="#a01830" stroke-width="1" fill="none"/>
<path d="M1023.4000000000001 788.7 H1032.4 M1027.9 784.2 V793.2" stroke="#a01830" stroke-width="1" fill="none"/>
<polyline points="71.5,867.5 71.5,878.8" fill="none" stroke="#00ee00" stroke-width="1.3" />
<polyline points="70.9,878.5 86,878.5" fill="none" stroke="#0000ff" stroke-width="1.4" />
<text x="68.6" y="863" fill="#00e000" font-size="9.5" font-weight="bold" font-family="Liberation Sans,sans-serif">y</text>
<text x="69" y="869.3" fill="#ff0000" font-size="9" font-weight="bold" font-family="Liberation Sans,sans-serif">x</text>
<text x="85.6" y="877" fill="#0000ff" font-size="9.5" font-weight="bold" font-family="Liberation Sans,sans-serif">z</text>
<text x="738.5" y="895" fill="#f4f4f4" font-size="10.5" font-weight="bold" font-family="Liberation Sans,sans-serif" textLength="29">persp</text>
</svg></div>
<div style="left:1477px;top:141px;width:1px;height:765px;background:#2c2c2c;"></div>
<div style="left:1487px;top:149px;width:22px;height:4px;background:repeating-linear-gradient(90deg,#8e8e8e 0 1px,transparent 1px 3px);-webkit-mask-image:repeating-linear-gradient(0deg,#000 0 1px,transparent 1px 3px);mask-image:repeating-linear-gradient(0deg,#000 0 1px,transparent 1px 3px);"></div>
<span class="t" style="left:1493.5px;top:185.19px;font-size:11px;line-height:14px;color:#c8c8c8;">Channels</span>
<div style="left:1486px;top:203px;width:412px;height:400px;background:#2b2b2b;"></div>
<div style="left:1484.5px;top:606px;width:413px;height:1.2px;background:#2d2d2d;"></div>
<div style="left:1485px;top:616px;width:61px;height:21.5px;background:#5d5d5d;border-radius:2px 2px 0 0;"></div>
<div style="left:1547px;top:617px;width:59.5px;height:20.5px;background:#373737;border-radius:2px 2px 0 0;"></div>
<div style="left:1608px;top:617px;width:48px;height:20.5px;background:#373737;border-radius:2px 2px 0 0;"></div>
<span class="t" style="left:1497px;top:620.19px;font-size:11px;line-height:14px;color:#e8e8e8;letter-spacing:0.239px;">Display</span>
<span class="t" style="left:1558.5px;top:620.69px;font-size:11px;line-height:14px;color:#bdbdbd;letter-spacing:0.084px;">Render</span>
<span class="t" style="left:1619px;top:620.69px;font-size:11px;line-height:14px;color:#bdbdbd;letter-spacing:0.213px;">Anim</span>
<div style="left:1485px;top:637px;width:412px;height:266.5px;background:#444444;border:1px solid #333;box-sizing:border-box;"></div>
<span class="t" style="left:1496px;top:641.89px;font-size:11px;line-height:14px;color:#c8c8c8;letter-spacing:-0.523px;">Layers</span>
<span class="t" style="left:1542px;top:641.89px;font-size:11px;line-height:14px;color:#c8c8c8;letter-spacing:0.615px;">Options</span>
<span class="t" style="left:1599px;top:641.89px;font-size:11px;line-height:14px;color:#c8c8c8;letter-spacing:0.292px;">Help</span>
<svg style="left:0px;top:0px;pointer-events:none;" width="1919" height="1030"><path d="M1799.5 670.6 L1806.4 666 L1812.7 670.4 L1806.3 675.3 Z" fill="#c8c8c8"/><path d="M1810.6 666.5 L1814 670.3 H1812.1 V674 H1809.2 V670.3 H1807.3 Z" fill="#45b5c4" stroke="#3a3a3a" stroke-width="0.5"/><path d="M1822.1 670.6 L1829 666 L1835.3 670.4 L1828.9 675.3 Z" fill="#c8c8c8"/><path d="M1833.6 674.7 L1837.2 671.2 H1835 V667.2 H1832.1 V671.2 H1830.2 Z" fill="#45b5c4" stroke="#3a3a3a" stroke-width="0.5"/><path d="M1849 670.6 L1855.9 666 L1862.2 670.4 L1855.8 675.3 Z" fill="#c8c8c8"/><path d="M1858 667 H1864.2 M1861.1 663.9 V670.1" stroke="#3a3a3a" stroke-width="3.2"/><path d="M1858 667 H1864.2 M1861.1 663.9 V670.1" stroke="#45b5c4" stroke-width="2.3"/><path d="M1873.1 670.6 L1880 666 L1886.3 670.4 L1879.9 675.3 Z" fill="#c8c8c8"/><circle cx="1883" cy="667" r="3.5" fill="#3a3a3a"/><circle cx="1883" cy="667" r="3.1" fill="#45b5c4"/></svg>
<div style="left:1488.5px;top:685px;width:404px;height:215px;background:#2b2b2b;"></div>
<div style="left:1489.5px;top:686px;width:350.5px;height:20px;background:#2e2e2e;"></div>
<div style="left:1493px;top:687px;width:19.6px;height:17.5px;background:#2b2b2b;border:1px solid #1e1e1e;border-radius:3px;box-sizing:border-box;"></div>
<div style="left:1516.4px;top:687px;width:19.6px;height:17.5px;background:#2b2b2b;border:1px solid #1e1e1e;border-radius:3px;box-sizing:border-box;"></div>
<div style="left:1539px;top:687px;width:19.6px;height:17.5px;background:#2b2b2b;border:1px solid #1e1e1e;border-radius:3px;box-sizing:border-box;"></div>
<span class="t" style="left:1499px;top:688.99px;font-size:11px;line-height:14px;color:#f0f0f0;">V</span>
<span class="t" style="left:1522.7px;top:688.99px;font-size:11px;line-height:14px;color:#f0f0f0;">P</span>
<div style="left:1562px;top:687px;width:16px;height:17.5px;background:#00a35c;"></div>
<span class="t" style="left:1581.4px;top:688.99px;font-size:11px;line-height:14px;color:#f4f4f4;letter-spacing:-0.157px;">CMR_Surgical_Versus_Bones</span>
<div style="left:1489.5px;top:706px;width:350.5px;height:20px;background:#5285a6;"></div>
<div style="left:1493px;top:707px;width:19.6px;height:17.5px;background:#5285a6;border:1px solid #2a4a60;border-radius:3px;box-sizing:border-box;"></div>
<div style="left:1516.4px;top:707px;width:19.6px;height:17.5px;background:#5285a6;border:1px solid #2a4a60;border-radius:3px;box-sizing:border-box;"></div>
<div style="left:1539px;top:707px;width:19.6px;height:17.5px;background:#5285a6;border:1px solid #2a4a60;border-radius:3px;box-sizing:border-box;"></div>
<span class="t" style="left:1499px;top:708.99px;font-size:11px;line-height:14px;color:#f0f0f0;">V</span>
<span class="t" style="left:1522.7px;top:708.99px;font-size:11px;line-height:14px;color:#f0f0f0;">P</span>
<div style="left:1562px;top:707px;width:16px;height:17.5px;background:#ffff66;"></div>
<span class="t" style="left:1581.4px;top:708.99px;font-size:11px;line-height:14px;color:#f4f4f4;letter-spacing:0.005px;">CMR_Surgical_Versus_Controllers</span>
<div style="left:1489.5px;top:726px;width:350.5px;height:20px;background:#2e2e2e;"></div>
<div style="left:1493px;top:727px;width:19.6px;height:17.5px;background:#2b2b2b;border:1px solid #1e1e1e;border-radius:3px;box-sizing:border-box;"></div>
<div style="left:1516.4px;top:727px;width:19.6px;height:17.5px;background:#2b2b2b;border:1px solid #1e1e1e;border-radius:3px;box-sizing:border-box;"></div>
<div style="left:1539px;top:727px;width:19.6px;height:17.5px;background:#2b2b2b;border:1px solid #1e1e1e;border-radius:3px;box-sizing:border-box;"></div>
<span class="t" style="left:1499px;top:728.99px;font-size:11px;line-height:14px;color:#f0f0f0;">V</span>
<span class="t" style="left:1522.7px;top:728.99px;font-size:11px;line-height:14px;color:#f0f0f0;">P</span>
<div style="left:1562px;top:727px;width:16px;height:17.5px;background:#9b0a2c;"></div>
<span class="t" style="left:1581.4px;top:728.99px;font-size:11px;line-height:14px;color:#f4f4f4;letter-spacing:-0.091px;">CMR_Surgical_Versus_Geometry</span>
<div style="left:7px;top:912px;width:4px;height:22px;background:repeating-linear-gradient(90deg,#8e8e8e 0 1px,transparent 1px 3px);-webkit-mask-image:repeating-linear-gradient(0deg,#000 0 1px,transparent 1px 3px);mask-image:repeating-linear-gradient(0deg,#000 0 1px,transparent 1px 3px);"></div>
<div style="left:7px;top:948px;width:4px;height:19px;background:repeating-linear-gradient(90deg,#8e8e8e 0 1px,transparent 1px 3px);-webkit-mask-image:repeating-linear-gradient(0deg,#000 0 1px,transparent 1px 3px);mask-image:repeating-linear-gradient(0deg,#000 0 1px,transparent 1px 3px);"></div>
<div style="left:7px;top:981px;width:4px;height:19px;background:repeating-linear-gradient(90deg,#8e8e8e 0 1px,transparent 1px 3px);-webkit-mask-image:repeating-linear-gradient(0deg,#000 0 1px,transparent 1px 3px);mask-image:repeating-linear-gradient(0deg,#000 0 1px,transparent 1px 3px);"></div>
<div style="left:7px;top:1011px;width:4px;height:13px;background:repeating-linear-gradient(90deg,#8e8e8e 0 1px,transparent 1px 3px);-webkit-mask-image:repeating-linear-gradient(0deg,#000 0 1px,transparent 1px 3px);mask-image:repeating-linear-gradient(0deg,#000 0 1px,transparent 1px 3px);"></div>
<div style="left:17.5px;top:910px;width:1628px;height:28px;background:#2b2b2b;"></div>
<div style="left:26.2609px;top:910px;width:12px;height:28px;background:#5a5a5a;"></div>
<span class="t" style="left:27.5px;top:922.69px;font-size:11px;line-height:14px;color:#f0f0f0;">1</span>
<div style="left:79.8px;top:923.5px;width:1.4px;height:14.5px;background:#b4b4b4;"></div>
<span class="t" style="left:80.5px;top:907.79px;font-size:11px;line-height:14px;color:#9a9a9a;letter-spacing:0.3px;">5</span>
<div style="left:146.8px;top:923.5px;width:1.4px;height:14.5px;background:#b4b4b4;"></div>
<span class="t" style="left:147.674px;top:907.79px;font-size:11px;line-height:14px;color:#9a9a9a;letter-spacing:0.3px;">10</span>
<div style="left:213.8px;top:923.5px;width:1.4px;height:14.5px;background:#b4b4b4;"></div>
<span class="t" style="left:214.848px;top:907.79px;font-size:11px;line-height:14px;color:#9a9a9a;letter-spacing:0.3px;">15</span>
<div style="left:281.8px;top:923.5px;width:1.4px;height:14.5px;background:#b4b4b4;"></div>
<span class="t" style="left:282.022px;top:907.79px;font-size:11px;line-height:14px;color:#9a9a9a;letter-spacing:0.3px;">20</span>
<div style="left:348.8px;top:923.5px;width:1.4px;height:14.5px;background:#b4b4b4;"></div>
<span class="t" style="left:349.196px;top:907.79px;font-size:11px;line-height:14px;color:#9a9a9a;letter-spacing:0.3px;">25</span>
<div style="left:415.8px;top:923.5px;width:1.4px;height:14.5px;background:#b4b4b4;"></div>
<span class="t" style="left:416.37px;top:907.79px;font-size:11px;line-height:14px;color:#9a9a9a;letter-spacing:0.3px;">30</span>
<div style="left:482.8px;top:923.5px;width:1.4px;height:14.5px;background:#b4b4b4;"></div>
<span class="t" style="left:483.543px;top:907.79px;font-size:11px;line-height:14px;color:#9a9a9a;letter-spacing:0.3px;">35</span>
<div style="left:549.8px;top:923.5px;width:1.4px;height:14.5px;background:#b4b4b4;"></div>
<span class="t" style="left:550.717px;top:907.79px;font-size:11px;line-height:14px;color:#9a9a9a;letter-spacing:0.3px;">40</span>
<div style="left:616.8px;top:923.5px;width:1.4px;height:14.5px;background:#b4b4b4;"></div>
<span class="t" style="left:617.891px;top:907.79px;font-size:11px;line-height:14px;color:#9a9a9a;letter-spacing:0.3px;">45</span>
<div style="left:684.8px;top:923.5px;width:1.4px;height:14.5px;background:#b4b4b4;"></div>
<span class="t" style="left:685.065px;top:907.79px;font-size:11px;line-height:14px;color:#9a9a9a;letter-spacing:0.3px;">50</span>
<div style="left:751.8px;top:923.5px;width:1.4px;height:14.5px;background:#b4b4b4;"></div>
<span class="t" style="left:752.239px;top:907.79px;font-size:11px;line-height:14px;color:#9a9a9a;letter-spacing:0.3px;">55</span>
<div style="left:818.8px;top:923.5px;width:1.4px;height:14.5px;background:#b4b4b4;"></div>
<span class="t" style="left:819.413px;top:907.79px;font-size:11px;line-height:14px;color:#9a9a9a;letter-spacing:0.3px;">60</span>
<div style="left:885.8px;top:923.5px;width:1.4px;height:14.5px;background:#b4b4b4;"></div>
<span class="t" style="left:886.587px;top:907.79px;font-size:11px;line-height:14px;color:#9a9a9a;letter-spacing:0.3px;">65</span>
<div style="left:952.8px;top:923.5px;width:1.4px;height:14.5px;background:#b4b4b4;"></div>
<span class="t" style="left:953.761px;top:907.79px;font-size:11px;line-height:14px;color:#9a9a9a;letter-spacing:0.3px;">70</span>
<div style="left:1019.8px;top:923.5px;width:1.4px;height:14.5px;background:#b4b4b4;"></div>
<span class="t" style="left:1020.93px;top:907.79px;font-size:11px;line-height:14px;color:#9a9a9a;letter-spacing:0.3px;">75</span>
<div style="left:1087.8px;top:923.5px;width:1.4px;height:14.5px;background:#b4b4b4;"></div>
<span class="t" style="left:1088.11px;top:907.79px;font-size:11px;line-height:14px;color:#9a9a9a;letter-spacing:0.3px;">80</span>
<div style="left:1154.8px;top:923.5px;width:1.4px;height:14.5px;background:#b4b4b4;"></div>
<span class="t" style="left:1155.28px;top:907.79px;font-size:11px;line-height:14px;color:#9a9a9a;letter-spacing:0.3px;">85</span>
<div style="left:1221.8px;top:923.5px;width:1.4px;height:14.5px;background:#b4b4b4;"></div>
<span class="t" style="left:1222.46px;top:907.79px;font-size:11px;line-height:14px;color:#9a9a9a;letter-spacing:0.3px;">90</span>
<div style="left:1288.8px;top:923.5px;width:1.4px;height:14.5px;background:#b4b4b4;"></div>
<span class="t" style="left:1289.63px;top:907.79px;font-size:11px;line-height:14px;color:#9a9a9a;letter-spacing:0.3px;">95</span>
<div style="left:1355.8px;top:923.5px;width:1.4px;height:14.5px;background:#b4b4b4;"></div>
<span class="t" style="left:1356.8px;top:907.79px;font-size:11px;line-height:14px;color:#9a9a9a;letter-spacing:0.3px;">100</span>
<div style="left:1422.8px;top:923.5px;width:1.4px;height:14.5px;background:#b4b4b4;"></div>
<span class="t" style="left:1423.98px;top:907.79px;font-size:11px;line-height:14px;color:#9a9a9a;letter-spacing:0.3px;">105</span>
<div style="left:1490.8px;top:923.5px;width:1.4px;height:14.5px;background:#b4b4b4;"></div>
<span class="t" style="left:1491.15px;top:907.79px;font-size:11px;line-height:14px;color:#9a9a9a;letter-spacing:0.3px;">110</span>
<div style="left:1557.8px;top:923.5px;width:1.4px;height:14.5px;background:#b4b4b4;"></div>
<span class="t" style="left:1558.33px;top:907.79px;font-size:11px;line-height:14px;color:#9a9a9a;letter-spacing:0.3px;">115</span>
<div style="left:1624.8px;top:923.5px;width:1.4px;height:14.5px;background:#b4b4b4;"></div>
<span class="t" style="left:1625.5px;top:907.79px;font-size:11px;line-height:14px;color:#9a9a9a;letter-spacing:0.3px;">120</span>
<div style="left:1652.5px;top:916px;width:68px;height:18px;background:#2b2b2b;border-radius:2px;"></div>
<span class="t" style="left:1659.5px;top:919.19px;font-size:11px;line-height:14px;color:#e0e0e0;">1</span>
<svg style="left:1730px;top:916px;" width="18" height="17"><rect x="0.5" y="1.5" width="1.6" height="14" fill="#c8c8c8"/><path d="M2.5 8.5 L10.5 1.5 V15.5 Z" fill="#c8c8c8"/><path d="M9.5 8.5 L17.5 1.5 V15.5 Z" fill="#c8c8c8"/></svg>
<svg style="left:1755px;top:916px;" width="18" height="17"><rect x="0.5" y="1.5" width="1.6" height="14" fill="#c8c8c8"/><path d="M4 8.5 L12 1.5 V15.5 Z" fill="#c8c8c8"/></svg>
<svg style="left:1777px;top:916px;" width="18" height="17"><rect x="0.7" y="1.5" width="2.6" height="14" fill="#e07a46"/><path d="M2 0 V17" stroke="#c8c8c8" stroke-width="0.5" stroke-dasharray="1 1"/><path d="M5 8.5 L13 1.5 V15.5 Z" fill="#c8c8c8"/></svg>
<svg style="left:1801px;top:916px;" width="18" height="17"><path d="M0.5 8.5 L13 0.5 V16.5 Z" fill="#c8c8c8"/></svg>
<svg style="left:1824px;top:916px;" width="18" height="17"><path d="M13.5 8.5 L1 0.5 V16.5 Z" fill="#c8c8c8"/></svg>
<svg style="left:1847px;top:916px;" width="18" height="17"><path d="M8.5 8.5 L0.5 1.5 V15.5 Z" fill="#c8c8c8"/><rect x="10.3" y="1.5" width="2.6" height="14" fill="#e07a46"/><path d="M11.6 0 V17" stroke="#c8c8c8" stroke-width="0.5" stroke-dasharray="1 1"/></svg>
<svg style="left:1870.5px;top:916px;" width="18" height="17"><path d="M8.5 8.5 L0.5 1.5 V15.5 Z" fill="#c8c8c8"/><rect x="10.5" y="1.5" width="1.6" height="14" fill="#c8c8c8"/></svg>
<svg style="left:1891px;top:916px;" width="18" height="17"><path d="M8 8.5 L0 1.5 V15.5 Z" fill="#c8c8c8"/><path d="M15 8.5 L7 1.5 V15.5 Z" fill="#c8c8c8"/><rect x="15.2" y="1.5" width="1.6" height="14" fill="#c8c8c8"/></svg>
<div style="left:18.3px;top:947.3px;width:67.5px;height:22px;background:#2b2b2b;border-radius:2px;"></div>
<div style="left:94.3px;top:947.3px;width:67.5px;height:22px;background:#2b2b2b;border-radius:2px;"></div>
<span class="t" style="left:24.5px;top:952.19px;font-size:11px;line-height:14px;color:#e0e0e0;">1</span>
<span class="t" style="left:100.5px;top:952.19px;font-size:11px;line-height:14px;color:#e0e0e0;">1</span>
<div style="left:169.5px;top:948.3px;width:1279px;height:20px;background:#383838;border-radius:2px;"></div>
<div style="left:176px;top:949.3px;width:770px;height:18px;background:#606060;border-radius:2px;"></div>
<div style="left:180px;top:952.5px;width:12.5px;height:12.5px;background:#9c9c9c;border-radius:2px;"></div>
<div style="left:929.5px;top:952.5px;width:12.5px;height:12.5px;background:#9c9c9c;border-radius:2px;"></div>
<span class="t" style="left:196.7px;top:952.19px;font-size:11px;line-height:14px;color:#e0e0e0;">1</span>
<span class="t" style="left:907.7px;top:952.19px;font-size:11px;line-height:14px;color:#e0e0e0;letter-spacing:-0.527px;">120</span>
<div style="left:1456px;top:947px;width:68px;height:23px;background:#2b2b2b;border-radius:2px;"></div>
<div style="left:1532px;top:947px;width:68px;height:23px;background:#2b2b2b;border-radius:2px;"></div>
<span class="t" style="left:1461.5px;top:952.19px;font-size:11px;line-height:14px;color:#e0e0e0;letter-spacing:-0.427px;">120</span>
<span class="t" style="left:1537.5px;top:952.19px;font-size:11px;line-height:14px;color:#e0e0e0;letter-spacing:-0.177px;">200</span>
<svg style="left:1606.5px;top:955px;" width="9" height="6"><path d="M0.5 0.5 H8.5 L4.5 5.2 Z" fill="#666" stroke="#aaa" stroke-width="0.7"/></svg>
<div style="left:1623px;top:946px;width:101px;height:24.5px;background:#444;border:1px solid #585858;border-radius:3px;box-sizing:border-box;"></div>
<span class="t" style="left:1628.7px;top:952.19px;font-size:11px;line-height:14px;color:#d4d4d4;letter-spacing:0.013px;">No Anim Layer</span>
<svg style="left:1735.5px;top:955px;" width="9" height="6"><path d="M0.5 0.5 H8.5 L4.5 5.2 Z" fill="#666" stroke="#aaa" stroke-width="0.7"/></svg>
<div style="left:1751.7px;top:946px;width:101.5px;height:24.5px;background:#444;border:1px solid #585858;border-radius:3px;box-sizing:border-box;"></div>
<span class="t" style="left:1758px;top:952.19px;font-size:11px;line-height:14px;color:#d4d4d4;letter-spacing:0.001px;">No Character Set</span>
<svg style="left:1862px;top:949.5px;" width="18" height="18"><path d="M3 5.5 A7 7 0 0 1 15.5 6.5 M15 12.5 A7 7 0 0 1 2.5 11.5" fill="none" stroke="#c8c8c8" stroke-width="1.2"/><path d="M0.8 4.6 L4.6 3.6 L3.8 7.4Z M17.2 13.4 L13.4 14.4 L14.2 10.6Z" fill="#c8c8c8"/><path d="M9 4.5 V13.5 M5.5 9 H12.5" stroke="#e07a46" stroke-width="1.8"/></svg>
<svg style="left:1890px;top:947px;" width="21" height="22"><circle cx="5" cy="6" r="2.6" fill="none" stroke="#c8c8c8" stroke-width="1.3"/><path d="M5 1.5 V3 M5 9 V10.5 M0.5 6 H2 M8 6 H9.5 M1.8 2.8 L2.9 3.9 M7.1 8.1 L8.2 9.2 M1.8 9.2 L2.9 8.1 M7.1 3.9 L8.2 2.8" stroke="#c8c8c8" stroke-width="1.1"/><circle cx="15.5" cy="6.2" r="1.9" fill="#e07a46"/><path d="M9.5 11.5 L12.5 9 L15.5 9.5 L17.5 12.5 L20 12 M14 9.5 L12.5 14.5 L15.5 17 L14.5 21 M12.5 14.5 L10 17.5 L7 17.5" fill="none" stroke="#e07a46" stroke-width="1.8" stroke-linejoin="round"/></svg>
<span class="t" style="left:28.3px;top:985.19px;font-size:11px;line-height:14px;color:#e0e0e0;letter-spacing:-0.600px;">MEL</span>
<div style="left:63.3px;top:980px;width:617px;height:22.5px;background:#2b2b2b;border-radius:2px;"></div>
<div style="left:686.7px;top:979.5px;width:1201px;height:24px;background:#2b2b2b;border-radius:2px;"></div>
<span class="t" style="left:693.3px;top:984.99px;font-size:11px;line-height:14px;color:#d8d8d8;letter-spacing:0.103px;">// Result: S:/Users/Avdenton/Desktop/CMR_Surgical_Versus_Rigged/CMR_Surgical_Versus_Rigged_for_Maya_mb_standart.mb</span>
<svg style="left:1893.5px;top:982px;" width="19" height="19"><rect x="0" y="0" width="18.5" height="18.5" fill="#c8c8c8"/><path d="M1.5 1.8 h1 M3.5 1.8 h1 M5.5 1.8 h1" stroke="#444" stroke-width="1"/><path d="M0 3.8 H18.5" stroke="#444" stroke-width="0.8"/><text x="9.2" y="14.3" font-size="9" font-weight="bold" text-anchor="middle" fill="#444" font-family="Liberation Sans,sans-serif">{;}</text></svg>
<div style="left:0px;top:1007.3px;width:1919px;height:1.5px;background:#2d2d2d;"></div>
<div style="left:1509px;top:20px;width:406px;height:583.5px;background:#444;border-radius:8px;box-shadow:0 4px 18px rgba(0,0,0,0.45),0 0 0 1px rgba(90,90,90,0.35);overflow:hidden;"><div style="left:0;top:0;width:406px;height:30px;background:#f3f3f3;"></div></div>
<svg style="left:1517px;top:27px;" width="16" height="16" viewBox="0 0 16 16"><defs><linearGradient id="mg1517" x1="0" y1="0" x2="0.25" y2="1"><stop offset="0" stop-color="#f4fcfb"/><stop offset="0.45" stop-color="#bfeceb"/><stop offset="1" stop-color="#27c4c6"/></linearGradient></defs><rect x="0" y="0" width="16" height="16" fill="url(#mg1517)"/><path d="M2 7 L7.6 2 L13 7 V12.4 H10.4 V8.6 L7.6 12 L4.6 8.6 V12.4 H2 Z" fill="#109a9c"/><path d="M2 7 L4.6 8.6 V12.4 H2 Z" fill="#1fe0e2"/><path d="M7.6 2 L4.6 7.5 L7.6 10.4 L10.4 7.5 Z" fill="#0b7e82"/><path d="M7.6 2 L6.2 6.5 L7.6 9 L9 6.5Z" fill="#13a3a4"/><rect x="8" y="13.4" width="7" height="1.4" fill="#8aa" opacity="0.7"/></svg>
<span class="t" style="left:1539.4px;top:27.14px;font-size:12px;line-height:16px;color:#7d7d7d;letter-spacing:0.083px;">Outliner</span>
<svg style="left:1790px;top:24px;" width="120" height="20"><path d="M6 10.5 H16" stroke="#8a8a8a" stroke-width="1"/><rect x="51.5" y="5.5" width="9.5" height="9.5" rx="1.2" fill="none" stroke="#8a8a8a" stroke-width="1"/><path d="M97 5 L107 15 M107 5 L97 15" stroke="#8a8a8a" stroke-width="1"/></svg>
<span class="t" style="left:1519.4px;top:54.19px;font-size:11px;line-height:14px;color:#c8c8c8;letter-spacing:0.089px;">Display</span>
<span class="t" style="left:1571px;top:54.19px;font-size:11px;line-height:14px;color:#c8c8c8;letter-spacing:0.495px;">Show</span>
<span class="t" style="left:1615px;top:54.19px;font-size:11px;line-height:14px;color:#c8c8c8;letter-spacing:0.359px;">Help</span>
<div style="left:1538px;top:73px;width:374px;height:18px;background:#2b2b2b;border-radius:3px;"></div>
<svg style="left:1517px;top:77px;" width="15" height="16"><rect x="2.5" y="2.5" width="9.5" height="11" rx="2" fill="none" stroke="#6e6e6e" stroke-width="1.6"/><path d="M0 0.5 L5 3 L0 5.5Z M0 10.5 L5 13 L0 15.5Z M9.5 0.5 L14.5 3 L9.5 5.5Z M9.5 10.5 L14.5 13 L9.5 15.5Z" fill="#6e6e6e"/><rect x="5" y="0" width="4.5" height="16" fill="#444" opacity="0"/></svg>
<div style="left:1512px;top:99.5px;width:400px;height:496px;background:#2b2b2b;"></div>
<div style="left:1901px;top:99.5px;width:11px;height:484px;background:#323232;"></div>
<svg style="left:1902.5px;top:102px;" width="9" height="6"><path d="M0 5.5 L4.5 0.5 L9 5.5Z" fill="#bdbdbd"/></svg>
<div style="left:1902.3px;top:111.5px;width:9.4px;height:438px;background:#5d5d5d;border-radius:4.5px;"></div>
<svg style="left:1902.5px;top:572px;" width="9" height="6"><path d="M0 0.5 L4.5 5.5 L9 0.5Z" fill="#bdbdbd"/></svg>
<div style="left:1901px;top:583px;width:11px;height:12.5px;background:#262626;"></div>
<svg style="left:1515px;top:585px;" width="6" height="9"><path d="M5.5 0 L0.5 4.5 L5.5 9Z" fill="#bdbdbd"/></svg>
<svg style="left:1891.5px;top:585px;" width="6" height="9"><path d="M0.5 0 L5.5 4.5 L0.5 9Z" fill="#bdbdbd"/></svg>
<div style="left:1524.6px;top:584.3px;width:362.5px;height:9.6px;background:#5d5d5d;border-radius:4.8px;"></div>
<svg style="left:0px;top:0px;" width="0" height="0"><defs><linearGradient id="mi" x1="0.2" y1="0" x2="0.8" y2="1"><stop offset="0" stop-color="#ffffff"/><stop offset="1" stop-color="#8e8e8e"/></linearGradient><radialGradient id="sg" cx="0.35" cy="0.35" r="0.7"><stop offset="0" stop-color="#fff6c0"/><stop offset="0.5" stop-color="#b89a3a"/><stop offset="1" stop-color="#3a2e10"/></radialGradient></defs></svg>
<svg style="left:1557px;top:104px;" width="15" height="10"><rect x="0" y="1.5" width="9" height="7" rx="0.8" fill="#bdbdbd"/><path d="M9.8 5 L14 1 V9 Z" fill="#bdbdbd"/></svg>
<span class="t" style="left:1575.5px;top:102.19px;font-size:11px;line-height:14px;color:#7a7a7a;letter-spacing:0.196px;">persp</span>
<svg style="left:1557px;top:124px;" width="15" height="10"><rect x="0" y="1.5" width="9" height="7" rx="0.8" fill="#bdbdbd"/><path d="M9.8 5 L14 1 V9 Z" fill="#bdbdbd"/></svg>
<span class="t" style="left:1575.5px;top:122.19px;font-size:11px;line-height:14px;color:#7a7a7a;letter-spacing:0.604px;">top</span>
<svg style="left:1557px;top:144px;" width="15" height="10"><rect x="0" y="1.5" width="9" height="7" rx="0.8" fill="#bdbdbd"/><path d="M9.8 5 L14 1 V9 Z" fill="#bdbdbd"/></svg>
<span class="t" style="left:1575.5px;top:142.19px;font-size:11px;line-height:14px;color:#7a7a7a;letter-spacing:0.872px;">front</span>
<svg style="left:1557px;top:164px;" width="15" height="10"><rect x="0" y="1.5" width="9" height="7" rx="0.8" fill="#bdbdbd"/><path d="M9.8 5 L14 1 V9 Z" fill="#bdbdbd"/></svg>
<span class="t" style="left:1575.5px;top:162.19px;font-size:11px;line-height:14px;color:#7a7a7a;letter-spacing:-0.027px;">side</span>
<svg style="left:1531px;top:182px;" width="14" height="14"><rect x="0.5" y="0.5" width="13" height="13" fill="#2b2b2b" stroke="#c0c0c0" stroke-width="1"/><path d="M3.5 7 H10.5" stroke="#e0e0e0" stroke-width="1.6"/></svg>
<svg style="left:1554px;top:181.8px;" width="20" height="14"><path d="M0.6 5.2 L11.2 0.6 L18.8 7.6 L7.4 13 Z" fill="url(#mi)" stroke="#111" stroke-width="1.1" stroke-linejoin="round"/><path d="M5.9 2.9 L13.1 10.3 M15 4.1 L4 9.1 M0.6 5.2 L18.8 7.6 M11.2 0.6 L7.4 13" stroke="#161616" stroke-width="0.9" fill="none"/></svg>
<span class="t" style="left:1575.5px;top:182.19px;font-size:11px;line-height:14px;color:#f0f0f0;letter-spacing:-0.097px;">Rectangle001_001</span>
<div style="left:1536px;top:197px;width:1px;height:22px;background:#b8b8b8;"></div>
<div style="left:1536px;top:209px;width:13px;height:1px;background:#b8b8b8;"></div>
<svg style="left:1551px;top:202px;" width="14" height="14"><rect x="0.5" y="0.5" width="13" height="13" fill="#2b2b2b" stroke="#c0c0c0" stroke-width="1"/><path d="M3.5 7 H10.5" stroke="#e0e0e0" stroke-width="1.6"/><path d="M7 3.5 V10.5" stroke="#e0e0e0" stroke-width="1.6"/></svg>
<svg style="left:1574px;top:201.8px;" width="20" height="14"><path d="M0.6 5.2 L11.2 0.6 L18.8 7.6 L7.4 13 Z" fill="url(#mi)" stroke="#111" stroke-width="1.1" stroke-linejoin="round"/><path d="M5.9 2.9 L13.1 10.3 M15 4.1 L4 9.1 M0.6 5.2 L18.8 7.6 M11.2 0.6 L7.4 13" stroke="#161616" stroke-width="0.9" fill="none"/></svg>
<span class="t" style="left:1595.6px;top:202.19px;font-size:11px;line-height:14px;color:#f0f0f0;letter-spacing:0.047px;">Rectangle002</span>
<div style="left:1536px;top:219px;width:1px;height:20px;background:#b8b8b8;"></div>
<div style="left:1536px;top:229px;width:13px;height:1px;background:#b8b8b8;"></div>
<svg style="left:1551px;top:222px;" width="14" height="14"><rect x="0.5" y="0.5" width="13" height="13" fill="#2b2b2b" stroke="#c0c0c0" stroke-width="1"/><path d="M3.5 7 H10.5" stroke="#e0e0e0" stroke-width="1.6"/><path d="M7 3.5 V10.5" stroke="#e0e0e0" stroke-width="1.6"/></svg>
<svg style="left:1574px;top:221.8px;" width="20" height="14"><path d="M0.6 5.2 L11.2 0.6 L18.8 7.6 L7.4 13 Z" fill="url(#mi)" stroke="#111" stroke-width="1.1" stroke-linejoin="round"/><path d="M5.9 2.9 L13.1 10.3 M15 4.1 L4 9.1 M0.6 5.2 L18.8 7.6 M11.2 0.6 L7.4 13" stroke="#161616" stroke-width="0.9" fill="none"/></svg>
<span class="t" style="left:1595.6px;top:222.19px;font-size:11px;line-height:14px;color:#f0f0f0;letter-spacing:-0.133px;">Circle008</span>
<div style="left:1536px;top:239px;width:1px;height:20px;background:#b8b8b8;"></div>
<div style="left:1536px;top:249px;width:13px;height:1px;background:#b8b8b8;"></div>
<svg style="left:1551px;top:242px;" width="14" height="14"><rect x="0.5" y="0.5" width="13" height="13" fill="#2b2b2b" stroke="#c0c0c0" stroke-width="1"/><path d="M3.5 7 H10.5" stroke="#e0e0e0" stroke-width="1.6"/><path d="M7 3.5 V10.5" stroke="#e0e0e0" stroke-width="1.6"/></svg>
<svg style="left:1574px;top:241.8px;" width="20" height="14"><path d="M0.6 5.2 L11.2 0.6 L18.8 7.6 L7.4 13 Z" fill="url(#mi)" stroke="#111" stroke-width="1.1" stroke-linejoin="round"/><path d="M5.9 2.9 L13.1 10.3 M15 4.1 L4 9.1 M0.6 5.2 L18.8 7.6 M11.2 0.6 L7.4 13" stroke="#161616" stroke-width="0.9" fill="none"/></svg>
<span class="t" style="left:1595.6px;top:242.19px;font-size:11px;line-height:14px;color:#f0f0f0;letter-spacing:-0.253px;">Circle009_001</span>
<div style="left:1536px;top:259px;width:1px;height:20px;background:#b8b8b8;"></div>
<div style="left:1536px;top:269px;width:13px;height:1px;background:#b8b8b8;"></div>
<svg style="left:1551px;top:262px;" width="14" height="14"><rect x="0.5" y="0.5" width="13" height="13" fill="#2b2b2b" stroke="#c0c0c0" stroke-width="1"/><path d="M3.5 7 H10.5" stroke="#e0e0e0" stroke-width="1.6"/><path d="M7 3.5 V10.5" stroke="#e0e0e0" stroke-width="1.6"/></svg>
<svg style="left:1574px;top:261.8px;" width="20" height="14"><path d="M0.6 5.2 L11.2 0.6 L18.8 7.6 L7.4 13 Z" fill="url(#mi)" stroke="#111" stroke-width="1.1" stroke-linejoin="round"/><path d="M5.9 2.9 L13.1 10.3 M15 4.1 L4 9.1 M0.6 5.2 L18.8 7.6 M11.2 0.6 L7.4 13" stroke="#161616" stroke-width="0.9" fill="none"/></svg>
<span class="t" style="left:1595.6px;top:262.19px;font-size:11px;line-height:14px;color:#f0f0f0;letter-spacing:-0.185px;">Circle011_001</span>
<div style="left:1536px;top:279px;width:1px;height:10px;background:#b8b8b8;"></div>
<div style="left:1536px;top:289px;width:13px;height:1px;background:#b8b8b8;"></div>
<svg style="left:1551px;top:282px;" width="14" height="14"><rect x="0.5" y="0.5" width="13" height="13" fill="#2b2b2b" stroke="#c0c0c0" stroke-width="1"/><path d="M3.5 7 H10.5" stroke="#e0e0e0" stroke-width="1.6"/><path d="M7 3.5 V10.5" stroke="#e0e0e0" stroke-width="1.6"/></svg>
<svg style="left:1574px;top:281.8px;" width="20" height="14"><path d="M0.6 5.2 L11.2 0.6 L18.8 7.6 L7.4 13 Z" fill="url(#mi)" stroke="#111" stroke-width="1.1" stroke-linejoin="round"/><path d="M5.9 2.9 L13.1 10.3 M15 4.1 L4 9.1 M0.6 5.2 L18.8 7.6 M11.2 0.6 L7.4 13" stroke="#161616" stroke-width="0.9" fill="none"/></svg>
<span class="t" style="left:1595.6px;top:282.19px;font-size:11px;line-height:14px;color:#f0f0f0;letter-spacing:-0.133px;">Circle010</span>
<svg style="left:1531px;top:302px;" width="14" height="14"><rect x="0.5" y="0.5" width="13" height="13" fill="#2b2b2b" stroke="#c0c0c0" stroke-width="1"/><path d="M3.5 7 H10.5" stroke="#e0e0e0" stroke-width="1.6"/></svg>
<svg style="left:1554px;top:301.8px;" width="20" height="14"><path d="M0.6 5.2 L11.2 0.6 L18.8 7.6 L7.4 13 Z" fill="url(#mi)" stroke="#111" stroke-width="1.1" stroke-linejoin="round"/><path d="M5.9 2.9 L13.1 10.3 M15 4.1 L4 9.1 M0.6 5.2 L18.8 7.6 M11.2 0.6 L7.4 13" stroke="#161616" stroke-width="0.9" fill="none"/></svg>
<span class="t" style="left:1575.5px;top:302.19px;font-size:11px;line-height:14px;color:#f0f0f0;letter-spacing:-0.035px;">Rectangle001</span>
<div style="left:1536px;top:317px;width:1px;height:22px;background:#b8b8b8;"></div>
<div style="left:1536px;top:329px;width:13px;height:1px;background:#b8b8b8;"></div>
<svg style="left:1551px;top:322px;" width="14" height="14"><rect x="0.5" y="0.5" width="13" height="13" fill="#2b2b2b" stroke="#c0c0c0" stroke-width="1"/><path d="M3.5 7 H10.5" stroke="#e0e0e0" stroke-width="1.6"/><path d="M7 3.5 V10.5" stroke="#e0e0e0" stroke-width="1.6"/></svg>
<svg style="left:1574px;top:321.8px;" width="20" height="14"><path d="M0.6 5.2 L11.2 0.6 L18.8 7.6 L7.4 13 Z" fill="url(#mi)" stroke="#111" stroke-width="1.1" stroke-linejoin="round"/><path d="M5.9 2.9 L13.1 10.3 M15 4.1 L4 9.1 M0.6 5.2 L18.8 7.6 M11.2 0.6 L7.4 13" stroke="#161616" stroke-width="0.9" fill="none"/></svg>
<span class="t" style="left:1595.6px;top:322.19px;font-size:11px;line-height:14px;color:#f0f0f0;letter-spacing:-0.159px;">Line004</span>
<div style="left:1536px;top:339px;width:1px;height:20px;background:#b8b8b8;"></div>
<div style="left:1536px;top:349px;width:13px;height:1px;background:#b8b8b8;"></div>
<svg style="left:1551px;top:342px;" width="14" height="14"><rect x="0.5" y="0.5" width="13" height="13" fill="#2b2b2b" stroke="#c0c0c0" stroke-width="1"/><path d="M3.5 7 H10.5" stroke="#e0e0e0" stroke-width="1.6"/><path d="M7 3.5 V10.5" stroke="#e0e0e0" stroke-width="1.6"/></svg>
<svg style="left:1574px;top:341.8px;" width="20" height="14"><path d="M0.6 5.2 L11.2 0.6 L18.8 7.6 L7.4 13 Z" fill="url(#mi)" stroke="#111" stroke-width="1.1" stroke-linejoin="round"/><path d="M5.9 2.9 L13.1 10.3 M15 4.1 L4 9.1 M0.6 5.2 L18.8 7.6 M11.2 0.6 L7.4 13" stroke="#161616" stroke-width="0.9" fill="none"/></svg>
<span class="t" style="left:1595.6px;top:342.19px;font-size:11px;line-height:14px;color:#f0f0f0;letter-spacing:-0.253px;">Circle006_001</span>
<div style="left:1536px;top:359px;width:1px;height:20px;background:#b8b8b8;"></div>
<div style="left:1536px;top:369px;width:13px;height:1px;background:#b8b8b8;"></div>
<svg style="left:1551px;top:362px;" width="14" height="14"><rect x="0.5" y="0.5" width="13" height="13" fill="#2b2b2b" stroke="#c0c0c0" stroke-width="1"/><path d="M3.5 7 H10.5" stroke="#e0e0e0" stroke-width="1.6"/><path d="M7 3.5 V10.5" stroke="#e0e0e0" stroke-width="1.6"/></svg>
<svg style="left:1574px;top:361.8px;" width="20" height="14"><path d="M0.6 5.2 L11.2 0.6 L18.8 7.6 L7.4 13 Z" fill="url(#mi)" stroke="#111" stroke-width="1.1" stroke-linejoin="round"/><path d="M5.9 2.9 L13.1 10.3 M15 4.1 L4 9.1 M0.6 5.2 L18.8 7.6 M11.2 0.6 L7.4 13" stroke="#161616" stroke-width="0.9" fill="none"/></svg>
<span class="t" style="left:1595.6px;top:362.19px;font-size:11px;line-height:14px;color:#f0f0f0;letter-spacing:-0.133px;">Circle007</span>
<div style="left:1536px;top:379px;width:1px;height:20px;background:#b8b8b8;"></div>
<div style="left:1536px;top:389px;width:13px;height:1px;background:#b8b8b8;"></div>
<svg style="left:1551px;top:382px;" width="14" height="14"><rect x="0.5" y="0.5" width="13" height="13" fill="#2b2b2b" stroke="#c0c0c0" stroke-width="1"/><path d="M3.5 7 H10.5" stroke="#e0e0e0" stroke-width="1.6"/><path d="M7 3.5 V10.5" stroke="#e0e0e0" stroke-width="1.6"/></svg>
<svg style="left:1574px;top:381.8px;" width="20" height="14"><path d="M0.6 5.2 L11.2 0.6 L18.8 7.6 L7.4 13 Z" fill="url(#mi)" stroke="#111" stroke-width="1.1" stroke-linejoin="round"/><path d="M5.9 2.9 L13.1 10.3 M15 4.1 L4 9.1 M0.6 5.2 L18.8 7.6 M11.2 0.6 L7.4 13" stroke="#161616" stroke-width="0.9" fill="none"/></svg>
<span class="t" style="left:1595.6px;top:382.19px;font-size:11px;line-height:14px;color:#f0f0f0;letter-spacing:-0.133px;">Circle009</span>
<div style="left:1536px;top:399px;width:1px;height:10px;background:#b8b8b8;"></div>
<div style="left:1536px;top:409px;width:13px;height:1px;background:#b8b8b8;"></div>
<svg style="left:1551px;top:402px;" width="14" height="14"><rect x="0.5" y="0.5" width="13" height="13" fill="#2b2b2b" stroke="#c0c0c0" stroke-width="1"/><path d="M3.5 7 H10.5" stroke="#e0e0e0" stroke-width="1.6"/><path d="M7 3.5 V10.5" stroke="#e0e0e0" stroke-width="1.6"/></svg>
<svg style="left:1574px;top:401.8px;" width="20" height="14"><path d="M0.6 5.2 L11.2 0.6 L18.8 7.6 L7.4 13 Z" fill="url(#mi)" stroke="#111" stroke-width="1.1" stroke-linejoin="round"/><path d="M5.9 2.9 L13.1 10.3 M15 4.1 L4 9.1 M0.6 5.2 L18.8 7.6 M11.2 0.6 L7.4 13" stroke="#161616" stroke-width="0.9" fill="none"/></svg>
<span class="t" style="left:1595.6px;top:402.19px;font-size:11px;line-height:14px;color:#f0f0f0;letter-spacing:-0.253px;">Circle008_001</span>
<svg style="left:1531px;top:422px;" width="14" height="14"><rect x="0.5" y="0.5" width="13" height="13" fill="#2b2b2b" stroke="#c0c0c0" stroke-width="1"/><path d="M3.5 7 H10.5" stroke="#e0e0e0" stroke-width="1.6"/></svg>
<svg style="left:1554px;top:421.8px;" width="20" height="14"><path d="M0.6 5.2 L11.2 0.6 L18.8 7.6 L7.4 13 Z" fill="url(#mi)" stroke="#111" stroke-width="1.1" stroke-linejoin="round"/><path d="M5.9 2.9 L13.1 10.3 M15 4.1 L4 9.1 M0.6 5.2 L18.8 7.6 M11.2 0.6 L7.4 13" stroke="#161616" stroke-width="0.9" fill="none"/></svg>
<span class="t" style="left:1575.5px;top:422.19px;font-size:11px;line-height:14px;color:#f0f0f0;letter-spacing:-0.055px;">joystick_1</span>
<div style="left:1536px;top:437px;width:1px;height:12px;background:#b8b8b8;"></div>
<div style="left:1536px;top:449px;width:13px;height:1px;background:#b8b8b8;"></div>
<svg style="left:1551px;top:442px;" width="14" height="14"><rect x="0.5" y="0.5" width="13" height="13" fill="#2b2b2b" stroke="#c0c0c0" stroke-width="1"/><path d="M3.5 7 H10.5" stroke="#e0e0e0" stroke-width="1.6"/></svg>
<svg style="left:1574px;top:441.8px;" width="20" height="14"><path d="M0.6 5.2 L11.2 0.6 L18.8 7.6 L7.4 13 Z" fill="url(#mi)" stroke="#111" stroke-width="1.1" stroke-linejoin="round"/><path d="M5.9 2.9 L13.1 10.3 M15 4.1 L4 9.1 M0.6 5.2 L18.8 7.6 M11.2 0.6 L7.4 13" stroke="#161616" stroke-width="0.9" fill="none"/></svg>
<span class="t" style="left:1595.6px;top:442.19px;font-size:11px;line-height:14px;color:#f0f0f0;letter-spacing:-0.161px;">wrist_2_001</span>
<div style="left:1556px;top:457px;width:1px;height:12.5px;background:#b8b8b8;"></div>
<div style="left:1556px;top:469px;width:18px;height:1px;background:#b8b8b8;"></div>
<svg style="left:1573.5px;top:466.5px;" width="6" height="6"><circle cx="3" cy="3" r="2.2" fill="#2b2b2b" stroke="#b8b8b8" stroke-width="1"/></svg>
<svg style="left:1594px;top:461.8px;" width="20" height="14"><path d="M0.6 5.2 L11.2 0.6 L18.8 7.6 L7.4 13 Z" fill="url(#mi)" stroke="#111" stroke-width="1.1" stroke-linejoin="round"/><path d="M5.9 2.9 L13.1 10.3 M15 4.1 L4 9.1 M0.6 5.2 L18.8 7.6 M11.2 0.6 L7.4 13" stroke="#161616" stroke-width="0.9" fill="none"/></svg>
<span class="t" style="left:1615.4px;top:462.19px;font-size:11px;line-height:14px;color:#f0f0f0;letter-spacing:0.026px;">wrist_1</span>
<svg style="left:1531px;top:482px;" width="14" height="14"><rect x="0.5" y="0.5" width="13" height="13" fill="#2b2b2b" stroke="#c0c0c0" stroke-width="1"/><path d="M3.5 7 H10.5" stroke="#e0e0e0" stroke-width="1.6"/></svg>
<svg style="left:1554px;top:481.8px;" width="20" height="14"><path d="M0.6 5.2 L11.2 0.6 L18.8 7.6 L7.4 13 Z" fill="url(#mi)" stroke="#111" stroke-width="1.1" stroke-linejoin="round"/><path d="M5.9 2.9 L13.1 10.3 M15 4.1 L4 9.1 M0.6 5.2 L18.8 7.6 M11.2 0.6 L7.4 13" stroke="#161616" stroke-width="0.9" fill="none"/></svg>
<span class="t" style="left:1575.5px;top:482.19px;font-size:11px;line-height:14px;color:#f0f0f0;letter-spacing:0.045px;">joystick_2</span>
<div style="left:1536px;top:497px;width:1px;height:12px;background:#b8b8b8;"></div>
<div style="left:1536px;top:509px;width:13px;height:1px;background:#b8b8b8;"></div>
<svg style="left:1551px;top:502px;" width="14" height="14"><rect x="0.5" y="0.5" width="13" height="13" fill="#2b2b2b" stroke="#c0c0c0" stroke-width="1"/><path d="M3.5 7 H10.5" stroke="#e0e0e0" stroke-width="1.6"/></svg>
<svg style="left:1574px;top:501.8px;" width="20" height="14"><path d="M0.6 5.2 L11.2 0.6 L18.8 7.6 L7.4 13 Z" fill="url(#mi)" stroke="#111" stroke-width="1.1" stroke-linejoin="round"/><path d="M5.9 2.9 L13.1 10.3 M15 4.1 L4 9.1 M0.6 5.2 L18.8 7.6 M11.2 0.6 L7.4 13" stroke="#161616" stroke-width="0.9" fill="none"/></svg>
<span class="t" style="left:1595.6px;top:502.19px;font-size:11px;line-height:14px;color:#f0f0f0;letter-spacing:-0.161px;">wrist_4_001</span>
<div style="left:1556px;top:517px;width:1px;height:12.5px;background:#b8b8b8;"></div>
<div style="left:1556px;top:529px;width:18px;height:1px;background:#b8b8b8;"></div>
<svg style="left:1573.5px;top:526.5px;" width="6" height="6"><circle cx="3" cy="3" r="2.2" fill="#2b2b2b" stroke="#b8b8b8" stroke-width="1"/></svg>
<svg style="left:1594px;top:521.8px;" width="20" height="14"><path d="M0.6 5.2 L11.2 0.6 L18.8 7.6 L7.4 13 Z" fill="url(#mi)" stroke="#111" stroke-width="1.1" stroke-linejoin="round"/><path d="M5.9 2.9 L13.1 10.3 M15 4.1 L4 9.1 M0.6 5.2 L18.8 7.6 M11.2 0.6 L7.4 13" stroke="#161616" stroke-width="0.9" fill="none"/></svg>
<span class="t" style="left:1615.4px;top:522.19px;font-size:11px;line-height:14px;color:#f0f0f0;letter-spacing:-0.171px;">wrist_3_001</span>
<svg style="left:1555.7px;top:541px;" width="16" height="16"><circle cx="8" cy="8" r="7.6" fill="#1a1a1a" stroke="#9a9a9a" stroke-width="0.8"/><rect x="8" y="3.2" width="4.8" height="8.5" rx="1" fill="#6fa0d8"/><ellipse cx="10.4" cy="3.6" rx="2.4" ry="1" fill="#a8c8f0"/><circle cx="6.2" cy="9.8" r="3.6" fill="url(#sg)"/></svg>
<span class="t" style="left:1575.5px;top:542.19px;font-size:11px;line-height:14px;color:#e4e4e4;letter-spacing:0.358px;">defaultLightSet</span>
<svg style="left:1555.7px;top:561px;" width="16" height="16"><circle cx="8" cy="8" r="7.6" fill="#1a1a1a" stroke="#9a9a9a" stroke-width="0.8"/><rect x="8" y="3.2" width="4.8" height="8.5" rx="1" fill="#6fa0d8"/><ellipse cx="10.4" cy="3.6" rx="2.4" ry="1" fill="#a8c8f0"/><circle cx="6.2" cy="9.8" r="3.6" fill="url(#sg)"/></svg>
<span class="t" style="left:1575.5px;top:562.19px;font-size:11px;line-height:14px;color:#e4e4e4;letter-spacing:0.345px;">defaultObjectSet</span>
</div></body></html>
